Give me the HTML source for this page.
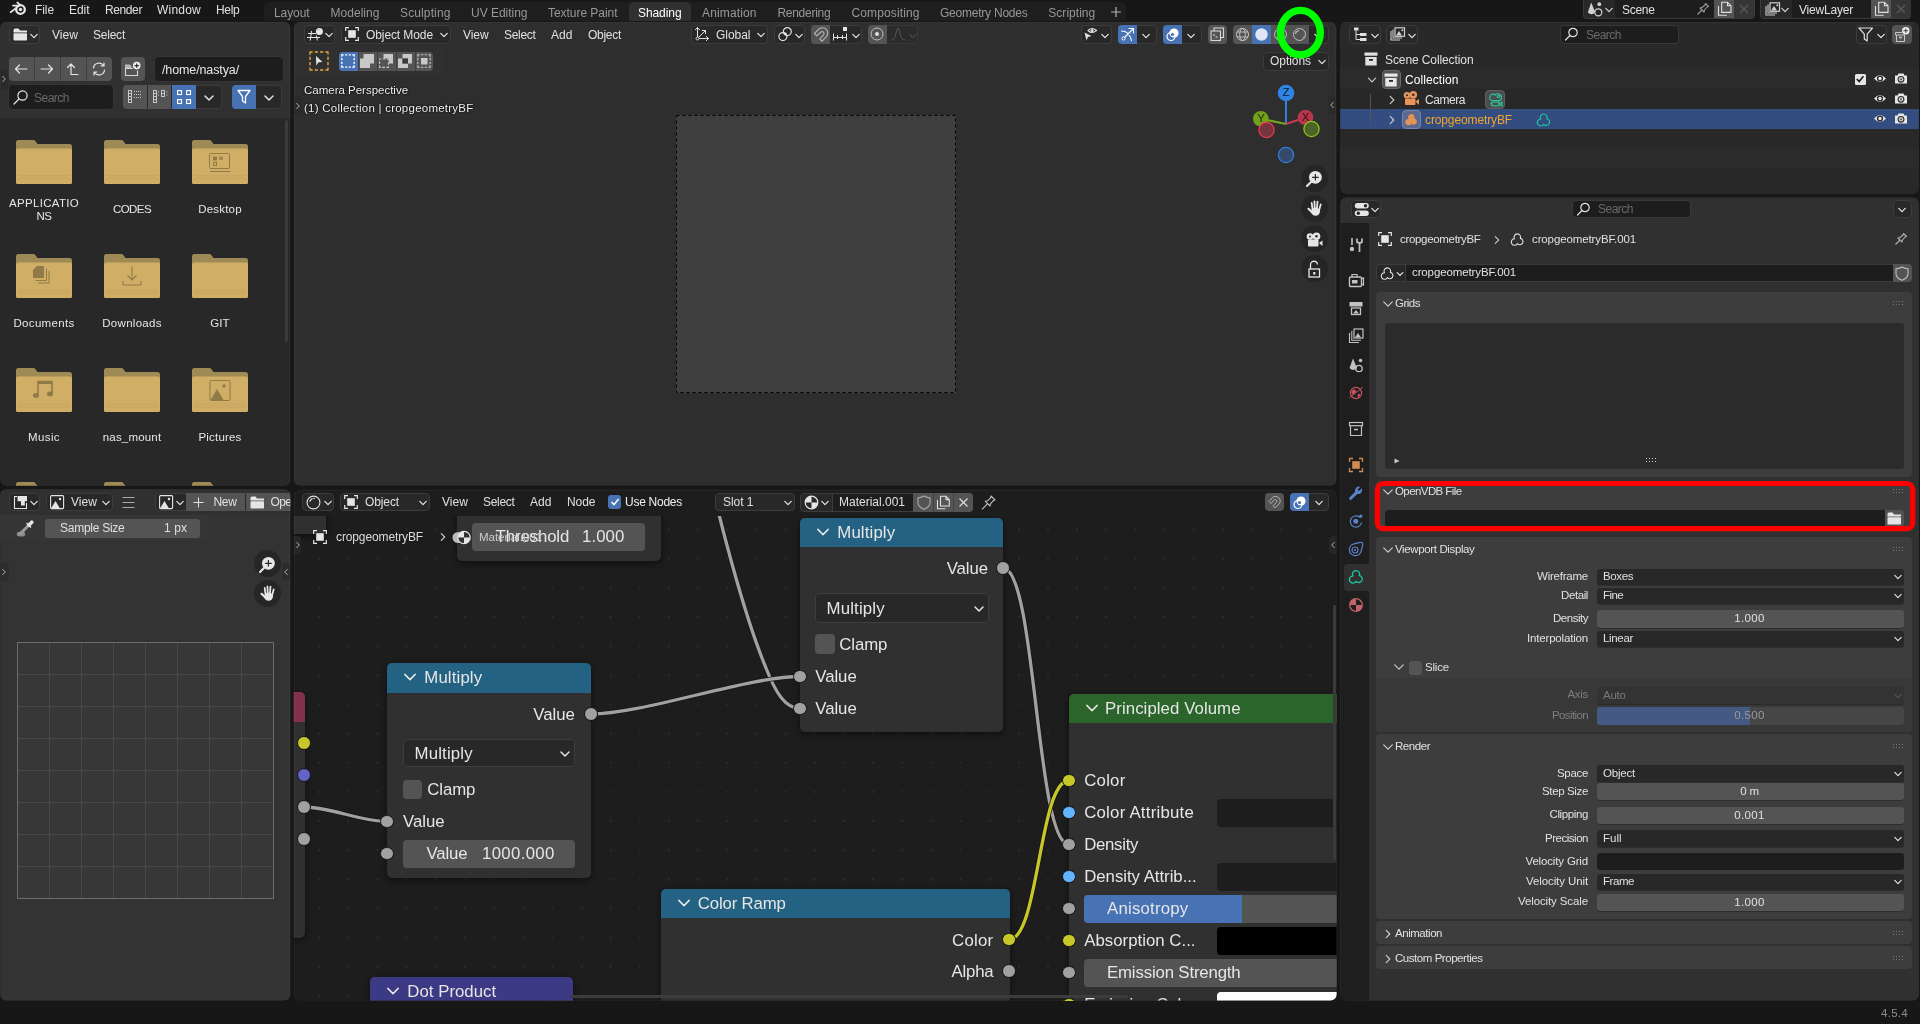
<!DOCTYPE html>
<html><head><meta charset="utf-8">
<style>
*{box-sizing:border-box;margin:0;padding:0}
html,body{width:1920px;height:1024px;overflow:hidden;background:#171717;font-family:"Liberation Sans",sans-serif;font-size:12px;color:#e6e6e6}
.abs{position:absolute}
.area{position:absolute;overflow:hidden;clip-path:inset(var(--t) var(--r) var(--b) var(--l) round var(--rad))}
.area:after{content:'';position:absolute;left:var(--l);top:var(--t);right:var(--r);bottom:var(--b);border-radius:var(--rad);box-shadow:inset 0 0 0 1px rgba(255,255,255,.035);pointer-events:none}
.t{position:absolute;white-space:nowrap}
svg{position:absolute;overflow:visible}
</style></head><body>
<div id="root" style="position:absolute;left:0;top:0;width:1920px;height:1024px;will-change:transform">
<svg style="left:9px;top:0px;" width="20" height="17" viewBox="0 0 20 17"><g fill="none" stroke="#e6e6e6" stroke-linecap="round"><path d="M1.6,12.2 L9.2,6.4 M4,5.6 H10.5 M8.3,2.5 L11.6,5.2" stroke-width="1.7"/><circle cx="11.5" cy="9.5" r="4.3" stroke-width="2.3"/></g><circle cx="11.5" cy="9.5" r="1.7" fill="#e6e6e6"/></svg>
<div class="t" style="left:35.00px;top:1.50px;font-size:12px;line-height:16px;color:#e0e0e0;letter-spacing:-0.086px;">File</div>
<div class="t" style="left:69.00px;top:1.50px;font-size:12px;line-height:16px;color:#e0e0e0;letter-spacing:-0.046px;">Edit</div>
<div class="t" style="left:105.00px;top:1.50px;font-size:12px;line-height:16px;color:#e0e0e0;letter-spacing:-0.395px;">Render</div>
<div class="t" style="left:157.00px;top:1.50px;font-size:12px;line-height:16px;color:#e0e0e0;letter-spacing:0.218px;">Window</div>
<div class="t" style="left:216.00px;top:1.50px;font-size:12px;line-height:16px;color:#e0e0e0;letter-spacing:-0.297px;">Help</div>
<div class="abs" style="left:264px;top:2.2px;width:862px;height:18.5px;background:#1e1e1e;border-radius:5px 5px 0 0;"></div>
<div class="abs" style="left:629px;top:2.2px;width:62px;height:18.5px;background:#303030;border-radius:5px 5px 0 0;"></div>
<div class="t" style="left:274.00px;top:4.70px;font-size:12px;line-height:16px;color:#989898;letter-spacing:-0.090px;">Layout</div>
<div class="t" style="left:330.50px;top:4.70px;font-size:12px;line-height:16px;color:#989898;letter-spacing:0.036px;">Modeling</div>
<div class="t" style="left:400.00px;top:4.70px;font-size:12px;line-height:16px;color:#989898;letter-spacing:0.125px;">Sculpting</div>
<div class="t" style="left:471.00px;top:4.70px;font-size:12px;line-height:16px;color:#989898;letter-spacing:-0.021px;">UV Editing</div>
<div class="t" style="left:548.00px;top:4.70px;font-size:12px;line-height:16px;color:#989898;letter-spacing:-0.043px;">Texture Paint</div>
<div class="t" style="left:638.00px;top:4.70px;font-size:12px;line-height:16px;color:#ffffff;letter-spacing:-0.079px;">Shading</div>
<div class="t" style="left:702.00px;top:4.70px;font-size:12px;line-height:16px;color:#989898;letter-spacing:0.147px;">Animation</div>
<div class="t" style="left:777.40px;top:4.70px;font-size:12px;line-height:16px;color:#989898;letter-spacing:-0.265px;">Rendering</div>
<div class="t" style="left:851.40px;top:4.70px;font-size:12px;line-height:16px;color:#989898;letter-spacing:0.135px;">Compositing</div>
<div class="t" style="left:940.00px;top:4.70px;font-size:12px;line-height:16px;color:#989898;letter-spacing:-0.230px;">Geometry Nodes</div>
<div class="t" style="left:1048.30px;top:4.70px;font-size:12px;line-height:16px;color:#989898;letter-spacing:0.033px;">Scripting</div>
<svg style="left:1110px;top:6px;" width="12" height="12" viewBox="0 0 12 12"><path d="M6,1 V11 M1,6 H11" stroke="#b0b0b0" stroke-width="1.2" fill="none"/></svg>
<div class="abs" style="left:1583px;top:0px;width:171.5px;height:18.5px;background:#282828;border-radius:0 0 4px 4px;border:1px solid #3a3a3a;border-top:none"></div>
<div class="abs" style="left:1615px;top:0px;width:99px;height:18px;background:#1d1d1d;border-radius:0px;"></div>
<div class="abs" style="left:1714px;top:0px;width:20px;height:18px;background:#545454;border-radius:0px;"></div>
<div class="abs" style="left:1734px;top:0px;width:20px;height:18px;background:#353535;border-radius:0 0 4px 0;"></div>
<svg style="left:1587px;top:1px;" width="18" height="16" viewBox="0 0 18 16"><path d="M4.2,1.5 L8.3,11.5 Q4.2,15 0.8,11.5 Z" fill="#d0d0d0"/><circle cx="12.3" cy="3.2" r="1.9" fill="#d0d0d0"/><circle cx="11.3" cy="11.3" r="3.5" fill="#222" stroke="#d0d0d0" stroke-width="1.3"/></svg>
<svg style="left:1601px;top:2px" width="16" height="16" viewBox="-8 -8 16 16"><path d="M-3.2,-1.6 L0,1.6 L3.2,-1.6" fill="none" stroke="#d0d0d0" stroke-width="1.3" stroke-linecap="round" stroke-linejoin="round"/></svg>
<div class="t" style="left:1622.00px;top:1.50px;font-size:12px;line-height:16px;color:#e0e0e0;letter-spacing:-0.306px;">Scene</div>
<svg style="left:1696px;top:2px;" width="14" height="14" viewBox="0 0 14 14"><path d="M9.5,1.5 L12.5,4.5 L11,5 L8.5,8 L8,10 L4,6 L6,5.5 L9,3 Z M6,8 L1.5,12.5" fill="none" stroke="#9a9a9a" stroke-width="1.1" stroke-linejoin="round"/></svg>
<svg style="left:1716.5px;top:1px;" width="15" height="16" viewBox="0 0 15 16"><path d="M1.5,5 V14.2 H9.8" fill="none" stroke="#e0e0e0" stroke-width="1.1"/><path d="M4.7,1.3 H10.5 L14,4.8 V11.4 H4.7 Z M10.5,1.3 V4.8 H14" fill="none" stroke="#e0e0e0" stroke-width="1.1" stroke-linejoin="round"/></svg>
<svg style="left:1739px;top:4px;" width="10" height="10" viewBox="0 0 10 10"><path d="M1,1 L9,9 M9,1 L1,9" stroke="#5a5a5a" stroke-width="1.2" fill="none"/></svg>
<div class="abs" style="left:1760px;top:0px;width:151px;height:18.5px;background:#282828;border-radius:0 0 4px 4px;border:1px solid #3a3a3a;border-top:none"></div>
<div class="abs" style="left:1792px;top:0px;width:79px;height:18px;background:#1d1d1d;border-radius:0px;"></div>
<div class="abs" style="left:1871px;top:0px;width:20px;height:18px;background:#545454;border-radius:0px;"></div>
<div class="abs" style="left:1891px;top:0px;width:20px;height:18px;background:#353535;border-radius:0 0 4px 0;"></div>
<svg style="left:1765px;top:2px;" width="16" height="14" viewBox="0 0 16 14"><path d="M1,4 V13 H10 M3,2.5 V11 H12" fill="none" stroke="#d0d0d0" stroke-width="1.1"/><rect x="5" y="0.8" width="9.5" height="8.5" fill="none" stroke="#d0d0d0" stroke-width="1.2"/><path d="M6,8.5 L9,4 L12,8.5 Z" fill="#d0d0d0"/><circle cx="12.3" cy="3.2" r="1" fill="#d0d0d0"/></svg>
<svg style="left:1777px;top:2px" width="16" height="16" viewBox="-8 -8 16 16"><path d="M-3.2,-1.6 L0,1.6 L3.2,-1.6" fill="none" stroke="#d0d0d0" stroke-width="1.3" stroke-linecap="round" stroke-linejoin="round"/></svg>
<div class="t" style="left:1799.00px;top:1.50px;font-size:12px;line-height:16px;color:#e0e0e0;letter-spacing:-0.203px;">ViewLayer</div>
<svg style="left:1873.5px;top:1px;" width="15" height="16" viewBox="0 0 15 16"><path d="M1.5,5 V14.2 H9.8" fill="none" stroke="#e0e0e0" stroke-width="1.1"/><path d="M4.7,1.3 H10.5 L14,4.8 V11.4 H4.7 Z M10.5,1.3 V4.8 H14" fill="none" stroke="#e0e0e0" stroke-width="1.1" stroke-linejoin="round"/></svg>
<svg style="left:1896px;top:4px;" width="10" height="10" viewBox="0 0 10 10"><path d="M1,1 L9,9 M9,1 L1,9" stroke="#5a5a5a" stroke-width="1.2" fill="none"/></svg>
<div class="t" style="left:1881.00px;top:1005.50px;font-size:11.5px;line-height:15px;color:#8c8c8c;letter-spacing:0.285px;">4.5.4</div>
<div class="area" style="left:0px;top:22px;width:291px;height:464px;background:#282828;--l:0.30px;--t:0.00px;--r:0.70px;--b:0.30px;--rad:6px;">
<div class="abs" style="left:0px;top:0px;width:291px;height:96px;background:#303030;border-radius:0px;"></div>
<div class="abs" style="left:8.5px;top:3px;width:31px;height:18.5px;background:#2b2b2b;border-radius:4px;border:1px solid #3e3e3e"></div>
<svg style="left:12.5px;top:5.5px;" width="15" height="13" viewBox="0 0 15 13"><path d="M0.5,2 Q0.5,0.5 2,0.5 H5.5 L7,2.5 H14 V4.5 H0.5 Z" fill="#e6e6e6"/><rect x="0.5" y="5.3" width="13.5" height="7.2" rx="0.8" fill="#e6e6e6"/></svg>
<svg style="left:25.5px;top:5.5px" width="16" height="16" viewBox="-8 -8 16 16"><path d="M-3.2,-1.6 L0,1.6 L3.2,-1.6" fill="none" stroke="#e0e0e0" stroke-width="1.3" stroke-linecap="round" stroke-linejoin="round"/></svg>
<div class="t" style="left:52.00px;top:5.00px;font-size:12px;line-height:16px;color:#e0e0e0;letter-spacing:0.050px;">View</div>
<div class="t" style="left:93.00px;top:5.00px;font-size:12px;line-height:16px;color:#e0e0e0;letter-spacing:-0.227px;">Select</div>
<div class="abs" style="left:9px;top:35px;width:102.5px;height:24px;background:#545454;border-radius:4px;"></div>
<div class="abs" style="left:34.2px;top:35px;width:1px;height:24px;background:#3f3f3f;border-radius:0px;"></div>
<div class="abs" style="left:60px;top:35px;width:1px;height:24px;background:#3f3f3f;border-radius:0px;"></div>
<div class="abs" style="left:85.8px;top:35px;width:1px;height:24px;background:#3f3f3f;border-radius:0px;"></div>
<svg style="left:14px;top:41px;" width="14" height="12" viewBox="0 0 14 12"><path d="M13,6 H1.5 M5.5,2 L1.5,6 L5.5,10" fill="none" stroke="#e6e6e6" stroke-width="1.2" stroke-linecap="round" stroke-linejoin="round"/></svg>
<svg style="left:40px;top:41px;" width="14" height="12" viewBox="0 0 14 12"><path d="M1,6 H12.5 M8.5,2 L12.5,6 L8.5,10" fill="none" stroke="#e6e6e6" stroke-width="1.2" stroke-linecap="round" stroke-linejoin="round"/></svg>
<svg style="left:66px;top:40px;" width="14" height="14" viewBox="0 0 14 14"><path d="M5,12.5 V2 M1.5,5.5 L5,2 L8.5,5.5 M5,12.5 H12" fill="none" stroke="#e6e6e6" stroke-width="1.2" stroke-linecap="round" stroke-linejoin="round"/></svg>
<svg style="left:92px;top:40px;" width="14" height="14" viewBox="0 0 14 14"><path d="M1.5,6 A5.5,5.5 0 0 1 11.5,3.5 M12,1 V4 H9 M12.5,8 A5.5,5.5 0 0 1 2.5,10.5 M2,13 V10 H5" fill="none" stroke="#e6e6e6" stroke-width="1.2" stroke-linecap="round" stroke-linejoin="round"/></svg>
<div class="abs" style="left:121px;top:35px;width:24px;height:24px;background:#545454;border-radius:4px;"></div>
<svg style="left:125px;top:39px;" width="16" height="15" viewBox="0 0 16 15"><path d="M0.5,7.5 V14.5 H12.5 V9.5" fill="none" stroke="#d8d8d8" stroke-width="1.1"/><path d="M0,3.5 H5 L6.5,5.5 V7.5 H0 Z" fill="#b8b8b8"/><path d="M0,7.5 H8" stroke="#d8d8d8" stroke-width="1.1"/><circle cx="11.7" cy="4.6" r="3.8" fill="#f0f0f0"/><path d="M11.7,2.4 V6.8 M9.5,4.6 H13.9" stroke="#2a2a2a" stroke-width="1.2"/></svg>
<div class="abs" style="left:155px;top:35px;width:127.5px;height:24px;background:#1d1d1d;border-radius:4px;box-shadow:0 0 0 0.6px #3a3a3a"></div>
<div class="t" style="left:162.00px;top:39.50px;font-size:12.5px;line-height:16px;color:#e6e6e6;letter-spacing:-0.117px;">/home/nastya/</div>
<div class="abs" style="left:9px;top:63px;width:104px;height:24px;background:#1d1d1d;border-radius:4px;box-shadow:0 0 0 0.6px #3a3a3a"></div>
<svg style="left:13px;top:67px;" width="16" height="16" viewBox="0 0 16 16"><circle cx="9.5" cy="6.5" r="4.6" fill="none" stroke="#e6e6e6" stroke-width="1.2" stroke-linecap="round" stroke-linejoin="round"/><path d="M6,10 L1,15" fill="none" stroke="#e6e6e6" stroke-width="1.2" stroke-linecap="round" stroke-linejoin="round"/></svg>
<div class="t" style="left:34.00px;top:67.50px;font-size:12px;line-height:16px;color:#6a6a6a;letter-spacing:-0.505px;">Search</div>
<div class="abs" style="left:123px;top:63px;width:99px;height:24px;background:#282828;border-radius:4px;border:1px solid #3a3a3a"></div>
<div class="abs" style="left:123px;top:63px;width:24px;height:24px;background:#545454;border-radius:4px 0 0 4px;"></div>
<div class="abs" style="left:148px;top:63px;width:23px;height:24px;background:#545454;border-radius:0px;"></div>
<div class="abs" style="left:172px;top:63px;width:24px;height:24px;background:#4772b3;border-radius:0px;"></div>
<svg style="left:127px;top:68px;" width="16" height="14" viewBox="0 0 16 14"><path d="M1.5,0.5 V12.5 M4.5,0.5 V12.5 M1,0.5 H5 M1,3.5 H5 M1,6.5 H5 M1,9.5 H5 M1,12.5 H5" stroke="#c8c8c8" stroke-width="1" fill="none"/><path d="M7,1.5 H15 M7,4.5 H15 M7,7.5 H15" stroke="#c8c8c8" stroke-width="1" stroke-dasharray="1,1" fill="none"/></svg>
<svg style="left:152px;top:68px;" width="16" height="14" viewBox="0 0 16 14"><path d="M1.5,0.5 V12.5 M4.5,0.5 V12.5 M1,0.5 H5 M1,3.5 H5 M1,6.5 H5 M1,9.5 H5 M1,12.5 H5" stroke="#c8c8c8" stroke-width="1" fill="none"/><path d="M9.5,0.5 V6.5 M12.5,0.5 V6.5 M9,0.5 H13 M9,3.5 H13 M9,6.5 H13" stroke="#c8c8c8" stroke-width="1" fill="none"/><g fill="#c8c8c8"><rect x="6" y="1.5" width="1" height="1"/><rect x="6" y="4.5" width="1" height="1"/><rect x="14.5" y="1.5" width="1" height="1"/><rect x="14.5" y="4.5" width="1" height="1"/></g></svg>
<svg style="left:177px;top:68px;" width="14" height="14" viewBox="0 0 14 14"><g fill="none" stroke="#ffffff" stroke-width="1.15"><rect x="0.6" y="0.6" width="3.9" height="3.9"/><rect x="9.6" y="0.6" width="3.9" height="3.9"/><rect x="0.6" y="9.6" width="3.9" height="3.9"/><rect x="9.6" y="9.6" width="3.9" height="3.9"/></g></svg>
<svg style="left:201px;top:67.5px" width="16" height="16" viewBox="-8 -8 16 16"><path d="M-4,-2.0 L0,2.0 L4,-2.0" fill="none" stroke="#e6e6e6" stroke-width="1.5" stroke-linecap="round" stroke-linejoin="round"/></svg>
<div class="abs" style="left:232px;top:63px;width:50px;height:24px;background:#282828;border-radius:4px;border:1px solid #3a3a3a"></div>
<div class="abs" style="left:232px;top:63px;width:24px;height:24px;background:#4772b3;border-radius:4px 0 0 4px;"></div>
<svg style="left:237px;top:67px;" width="14" height="16" viewBox="0 0 14 16"><path d="M1,1.5 H13 L8.5,7.5 V14 L5.5,12 V7.5 Z" fill="none" stroke="#ffffff" stroke-width="1.3" stroke-linejoin="round"/></svg>
<svg style="left:261px;top:67.5px" width="16" height="16" viewBox="-8 -8 16 16"><path d="M-4,-2.0 L0,2.0 L4,-2.0" fill="none" stroke="#e6e6e6" stroke-width="1.5" stroke-linecap="round" stroke-linejoin="round"/></svg>
<div class="abs" style="left:0px;top:47px;width:8px;height:20px;background:#2a2a2a;border-radius:0 4px 4px 0;"></div>
<svg style="left:-4.5px;top:49px" width="16" height="16" viewBox="-8 -8 16 16"><path d="M-1.3,-2.6 L1.3,0 L-1.3,2.6" fill="none" stroke="#b0b0b0" stroke-width="1" stroke-linecap="round" stroke-linejoin="round"/></svg>
<div class="abs" style="left:285px;top:98px;width:3.2px;height:222px;background:#3c3c3c;border-radius:2px;"></div>
<svg style="left:16px;top:118px;" width="56" height="44" viewBox="0 0 56 44"><path d="M0,2.5 Q0,0 2.5,0 H17 Q18.5,0 19.5,1.2 L21.5,4 H53.5 Q56,4 56,6.5 V12 H0 Z" fill="#9e8a55"/><path d="M0,10.5 Q0,8.5 2,8.5 H54 Q56,8.5 56,10.5 V42.5 Q56,44 54.5,44 H1.5 Q0,44 0,42.5 Z" fill="#d0ae66"/><path d="M2,35.5 H54 M2,37.5 H54 M2,39.5 H54" stroke="#c4a35e" stroke-width="0.6" fill="none"/></svg>
<div class="t" style="left:9.00px;top:173.50px;font-size:11.5px;line-height:15px;color:#e6e6e6;letter-spacing:0.311px;">APPLICATIO</div>
<div class="t" style="left:36.50px;top:186.50px;font-size:11.5px;line-height:15px;color:#e6e6e6;letter-spacing:-0.488px;">NS</div>
<svg style="left:104px;top:118px;" width="56" height="44" viewBox="0 0 56 44"><path d="M0,2.5 Q0,0 2.5,0 H17 Q18.5,0 19.5,1.2 L21.5,4 H53.5 Q56,4 56,6.5 V12 H0 Z" fill="#9e8a55"/><path d="M0,10.5 Q0,8.5 2,8.5 H54 Q56,8.5 56,10.5 V42.5 Q56,44 54.5,44 H1.5 Q0,44 0,42.5 Z" fill="#d0ae66"/><path d="M2,35.5 H54 M2,37.5 H54 M2,39.5 H54" stroke="#c4a35e" stroke-width="0.6" fill="none"/></svg>
<div class="t" style="left:113.00px;top:179.50px;font-size:11.5px;line-height:15px;color:#e6e6e6;letter-spacing:-0.580px;">CODES</div>
<svg style="left:192px;top:118px;" width="56" height="44" viewBox="0 0 56 44"><path d="M0,2.5 Q0,0 2.5,0 H17 Q18.5,0 19.5,1.2 L21.5,4 H53.5 Q56,4 56,6.5 V12 H0 Z" fill="#9e8a55"/><path d="M0,10.5 Q0,8.5 2,8.5 H54 Q56,8.5 56,10.5 V42.5 Q56,44 54.5,44 H1.5 Q0,44 0,42.5 Z" fill="#d0ae66"/><path d="M2,35.5 H54 M2,37.5 H54 M2,39.5 H54" stroke="#c4a35e" stroke-width="0.6" fill="none"/><rect x="17.5" y="13.5" width="20" height="15" rx="1" fill="none" stroke="#8f7a48" stroke-width="1"/><rect x="21" y="16.5" width="4" height="4" fill="#8f7a48"/><rect x="27" y="16.5" width="4" height="3.5" fill="#8f7a48" opacity=".7"/><rect x="21.5" y="22.5" width="3" height="3" fill="none" stroke="#8f7a48" stroke-width="1"/><path d="M18,31.5 H38" stroke="#8f7a48" stroke-width="1"/></svg>
<div class="t" style="left:198.25px;top:179.50px;font-size:11.5px;line-height:15px;color:#e6e6e6;letter-spacing:0.188px;">Desktop</div>
<svg style="left:16px;top:232px;" width="56" height="44" viewBox="0 0 56 44"><path d="M0,2.5 Q0,0 2.5,0 H17 Q18.5,0 19.5,1.2 L21.5,4 H53.5 Q56,4 56,6.5 V12 H0 Z" fill="#9e8a55"/><path d="M0,10.5 Q0,8.5 2,8.5 H54 Q56,8.5 56,10.5 V42.5 Q56,44 54.5,44 H1.5 Q0,44 0,42.5 Z" fill="#d0ae66"/><path d="M2,35.5 H54 M2,37.5 H54 M2,39.5 H54" stroke="#c4a35e" stroke-width="0.6" fill="none"/><path d="M21,12 H28 V24 H17 V16 Z" fill="#8f7a48"/><path d="M30.5,14.5 V26.5 H19.5 M33,17 V29 H22" fill="none" stroke="#8f7a48" stroke-width="1"/></svg>
<div class="t" style="left:13.50px;top:293.50px;font-size:11.5px;line-height:15px;color:#e6e6e6;letter-spacing:0.316px;">Documents</div>
<svg style="left:104px;top:232px;" width="56" height="44" viewBox="0 0 56 44"><path d="M0,2.5 Q0,0 2.5,0 H17 Q18.5,0 19.5,1.2 L21.5,4 H53.5 Q56,4 56,6.5 V12 H0 Z" fill="#9e8a55"/><path d="M0,10.5 Q0,8.5 2,8.5 H54 Q56,8.5 56,10.5 V42.5 Q56,44 54.5,44 H1.5 Q0,44 0,42.5 Z" fill="#d0ae66"/><path d="M2,35.5 H54 M2,37.5 H54 M2,39.5 H54" stroke="#c4a35e" stroke-width="0.6" fill="none"/><path d="M28,12.5 V26 M23.5,21.5 L28,26 L32.5,21.5 M19,27 V31 H37 V27" fill="none" stroke="#8f7a48" stroke-width="1.1"/></svg>
<div class="t" style="left:102.25px;top:293.50px;font-size:11.5px;line-height:15px;color:#e6e6e6;letter-spacing:0.290px;">Downloads</div>
<svg style="left:192px;top:232px;" width="56" height="44" viewBox="0 0 56 44"><path d="M0,2.5 Q0,0 2.5,0 H17 Q18.5,0 19.5,1.2 L21.5,4 H53.5 Q56,4 56,6.5 V12 H0 Z" fill="#9e8a55"/><path d="M0,10.5 Q0,8.5 2,8.5 H54 Q56,8.5 56,10.5 V42.5 Q56,44 54.5,44 H1.5 Q0,44 0,42.5 Z" fill="#d0ae66"/><path d="M2,35.5 H54 M2,37.5 H54 M2,39.5 H54" stroke="#c4a35e" stroke-width="0.6" fill="none"/></svg>
<div class="t" style="left:210.25px;top:293.50px;font-size:11.5px;line-height:15px;color:#e6e6e6;letter-spacing:0.112px;">GIT</div>
<svg style="left:16px;top:346px;" width="56" height="44" viewBox="0 0 56 44"><path d="M0,2.5 Q0,0 2.5,0 H17 Q18.5,0 19.5,1.2 L21.5,4 H53.5 Q56,4 56,6.5 V12 H0 Z" fill="#9e8a55"/><path d="M0,10.5 Q0,8.5 2,8.5 H54 Q56,8.5 56,10.5 V42.5 Q56,44 54.5,44 H1.5 Q0,44 0,42.5 Z" fill="#d0ae66"/><path d="M2,35.5 H54 M2,37.5 H54 M2,39.5 H54" stroke="#c4a35e" stroke-width="0.6" fill="none"/><path d="M22,27 V13.5 H36 V25.5" fill="none" stroke="#8f7a48" stroke-width="1.6"/><rect x="22" y="13" width="14" height="3" fill="#8f7a48"/><ellipse cx="20" cy="27.5" rx="3" ry="2.4" fill="#8f7a48"/><ellipse cx="34" cy="26" rx="3" ry="2.4" fill="#8f7a48"/></svg>
<div class="t" style="left:28.00px;top:407.50px;font-size:11.5px;line-height:15px;color:#e6e6e6;letter-spacing:0.395px;">Music</div>
<svg style="left:104px;top:346px;" width="56" height="44" viewBox="0 0 56 44"><path d="M0,2.5 Q0,0 2.5,0 H17 Q18.5,0 19.5,1.2 L21.5,4 H53.5 Q56,4 56,6.5 V12 H0 Z" fill="#9e8a55"/><path d="M0,10.5 Q0,8.5 2,8.5 H54 Q56,8.5 56,10.5 V42.5 Q56,44 54.5,44 H1.5 Q0,44 0,42.5 Z" fill="#d0ae66"/><path d="M2,35.5 H54 M2,37.5 H54 M2,39.5 H54" stroke="#c4a35e" stroke-width="0.6" fill="none"/></svg>
<div class="t" style="left:102.75px;top:407.50px;font-size:11.5px;line-height:15px;color:#e6e6e6;letter-spacing:0.179px;">nas_mount</div>
<svg style="left:192px;top:346px;" width="56" height="44" viewBox="0 0 56 44"><path d="M0,2.5 Q0,0 2.5,0 H17 Q18.5,0 19.5,1.2 L21.5,4 H53.5 Q56,4 56,6.5 V12 H0 Z" fill="#9e8a55"/><path d="M0,10.5 Q0,8.5 2,8.5 H54 Q56,8.5 56,10.5 V42.5 Q56,44 54.5,44 H1.5 Q0,44 0,42.5 Z" fill="#d0ae66"/><path d="M2,35.5 H54 M2,37.5 H54 M2,39.5 H54" stroke="#c4a35e" stroke-width="0.6" fill="none"/><rect x="18" y="12.5" width="20" height="20" rx="1" fill="none" stroke="#8f7a48" stroke-width="1"/><path d="M18.5,32 L25,21 L31.5,32 Z" fill="#8f7a48"/><circle cx="32" cy="18" r="1.7" fill="#8f7a48"/></svg>
<div class="t" style="left:198.50px;top:407.50px;font-size:11.5px;line-height:15px;color:#e6e6e6;letter-spacing:0.183px;">Pictures</div>
<svg style="left:16px;top:460px;" width="56" height="44" viewBox="0 0 56 44"><path d="M0,2.5 Q0,0 2.5,0 H17 Q18.5,0 19.5,1.2 L21.5,4 H53.5 Q56,4 56,6.5 V12 H0 Z" fill="#9e8a55"/><path d="M0,10.5 Q0,8.5 2,8.5 H54 Q56,8.5 56,10.5 V42.5 Q56,44 54.5,44 H1.5 Q0,44 0,42.5 Z" fill="#d0ae66"/><path d="M2,35.5 H54 M2,37.5 H54 M2,39.5 H54" stroke="#c4a35e" stroke-width="0.6" fill="none"/></svg>
<svg style="left:104px;top:460px;" width="56" height="44" viewBox="0 0 56 44"><path d="M0,2.5 Q0,0 2.5,0 H17 Q18.5,0 19.5,1.2 L21.5,4 H53.5 Q56,4 56,6.5 V12 H0 Z" fill="#9e8a55"/><path d="M0,10.5 Q0,8.5 2,8.5 H54 Q56,8.5 56,10.5 V42.5 Q56,44 54.5,44 H1.5 Q0,44 0,42.5 Z" fill="#d0ae66"/><path d="M2,35.5 H54 M2,37.5 H54 M2,39.5 H54" stroke="#c4a35e" stroke-width="0.6" fill="none"/></svg>
<svg style="left:192px;top:460px;" width="56" height="44" viewBox="0 0 56 44"><path d="M0,2.5 Q0,0 2.5,0 H17 Q18.5,0 19.5,1.2 L21.5,4 H53.5 Q56,4 56,6.5 V12 H0 Z" fill="#9e8a55"/><path d="M0,10.5 Q0,8.5 2,8.5 H54 Q56,8.5 56,10.5 V42.5 Q56,44 54.5,44 H1.5 Q0,44 0,42.5 Z" fill="#d0ae66"/><path d="M2,35.5 H54 M2,37.5 H54 M2,39.5 H54" stroke="#c4a35e" stroke-width="0.6" fill="none"/></svg>
</div>
<div class="area" style="left:293px;top:22px;width:1044px;height:464px;background:#2e2e2e;--l:0.80px;--t:0.00px;--r:0.60px;--b:0.40px;--rad:6px;">
<div class="abs" style="left:1px;top:27px;width:150px;height:25px;background:#303030;border-radius:0px;"></div>
<div class="abs" style="left:10.5px;top:3px;width:31px;height:18.5px;background:#282828;border-radius:4px;border:1px solid #3c3c3c"></div>
<svg style="left:14px;top:5px;" width="18" height="15" viewBox="0 0 18 15"><path d="M1,6.5 H9 M0,10.5 H13 M4.6,4 L3.2,13.5 M9.4,8.5 L10.4,13.5" stroke="#e6e6e6" stroke-width="1" fill="none"/><circle cx="12.4" cy="4.4" r="3.5" fill="#e6e6e6"/><path d="M10.6,3.6 A2.2,2.2 0 0 1 12.4,2.3" stroke="#9a9a9a" stroke-width="0.8" fill="none"/></svg>
<svg style="left:27.5px;top:5px" width="16" height="16" viewBox="-8 -8 16 16"><path d="M-3.2,-1.6 L0,1.6 L3.2,-1.6" fill="none" stroke="#e0e0e0" stroke-width="1.3" stroke-linecap="round" stroke-linejoin="round"/></svg>
<div class="abs" style="left:47.5px;top:3px;width:110px;height:18.5px;background:#282828;border-radius:4px;border:1px solid #3c3c3c"></div>
<svg style="left:52px;top:5px;" width="14" height="14" viewBox="0 0 14 14"><rect x="3.2" y="3.2" width="7.6" height="7.6" fill="#e6e6e6"/><path d="M0.7,4 V0.7 H4 M10,0.7 H13.3 V4 M13.3,10 V13.3 H10 M4,13.3 H0.7 V10" fill="none" stroke="#e6e6e6" stroke-width="1.2"/></svg>
<div class="t" style="left:73.00px;top:4.50px;font-size:12px;line-height:16px;color:#e0e0e0;letter-spacing:-0.096px;">Object Mode</div>
<svg style="left:143px;top:5px" width="16" height="16" viewBox="-8 -8 16 16"><path d="M-3.2,-1.6 L0,1.6 L3.2,-1.6" fill="none" stroke="#e0e0e0" stroke-width="1.3" stroke-linecap="round" stroke-linejoin="round"/></svg>
<div class="t" style="left:170.00px;top:4.50px;font-size:12px;line-height:16px;color:#e0e0e0;letter-spacing:-0.075px;">View</div>
<div class="t" style="left:211.00px;top:4.50px;font-size:12px;line-height:16px;color:#e0e0e0;letter-spacing:-0.310px;">Select</div>
<div class="t" style="left:258.00px;top:4.50px;font-size:12px;line-height:16px;color:#e0e0e0;letter-spacing:0.048px;">Add</div>
<div class="t" style="left:295.00px;top:4.50px;font-size:12px;line-height:16px;color:#e0e0e0;letter-spacing:-0.282px;">Object</div>
<div class="abs" style="left:398px;top:3px;width:76.5px;height:18.5px;background:#282828;border-radius:4px;border:1px solid #3c3c3c"></div>
<svg style="left:402px;top:5px;" width="15" height="15" viewBox="0 0 15 15"><g fill="none" stroke="#e0e0e0" stroke-width="1" stroke-linecap="round" stroke-linejoin="round"><path d="M2.5,11.5 V0.6 M0.3,2.8 L2.5,0.6 L4.7,2.8 M2.5,11.5 H13.5 M11.3,9.3 L13.5,11.5 L11.3,13.7 M2.5,11.5 L10.5,3.5 M7.3,3.5 H10.5 V6.7"/></g><circle cx="2.5" cy="11.5" r="1.5" fill="#282828" stroke="#e0e0e0" stroke-width="0.9"/></svg>
<div class="t" style="left:423.00px;top:4.50px;font-size:12px;line-height:16px;color:#e0e0e0;letter-spacing:-0.033px;">Global</div>
<svg style="left:460px;top:5px" width="16" height="16" viewBox="-8 -8 16 16"><path d="M-3.2,-1.6 L0,1.6 L3.2,-1.6" fill="none" stroke="#e0e0e0" stroke-width="1.3" stroke-linecap="round" stroke-linejoin="round"/></svg>
<div class="abs" style="left:480.5px;top:3px;width:31px;height:18.5px;background:#282828;border-radius:4px;border:1px solid #3c3c3c"></div>
<svg style="left:484px;top:5px;" width="14" height="15" viewBox="0 0 14 15"><circle cx="10.3" cy="4.6" r="4" fill="none" stroke="#e0e0e0" stroke-width="1.2" stroke-linecap="round" stroke-linejoin="round"/><circle cx="5.9" cy="9.6" r="4" fill="none" stroke="#e0e0e0" stroke-width="1.2" stroke-linecap="round" stroke-linejoin="round"/><circle cx="8.3" cy="6.8" r="1.25" fill="#e6e6e6"/></svg>
<svg style="left:497.5px;top:5.5px" width="16" height="16" viewBox="-8 -8 16 16"><path d="M-3.2,-1.6 L0,1.6 L3.2,-1.6" fill="none" stroke="#e0e0e0" stroke-width="1.3" stroke-linecap="round" stroke-linejoin="round"/></svg>
<div class="abs" style="left:518px;top:3px;width:50.5px;height:18.5px;background:#282828;border-radius:4px;border:1px solid #3c3c3c"></div>
<div class="abs" style="left:518px;top:3px;width:19px;height:18.5px;background:#545454;border-radius:4px 0 0 4px;"></div>
<svg style="left:519.5px;top:4.5px;" width="16" height="16" viewBox="0 0 16 16"><path d="M1.5,6.5 L5.5,2.3 A5.2,5.2 0 0 1 13.2,9.8 L9,14.2 L6.8,12 L10.6,7.8 A2,2 0 0 0 7.8,5 L3.8,8.8 Z" fill="none" stroke="#b8b8b8" stroke-width="1.1" stroke-linejoin="round"/></svg>
<svg style="left:539px;top:4px;" width="16" height="15" viewBox="0 0 16 15"><path d="M1.5,7.5 V14.5 M14.5,7.5 V14.5 M5.5,9 V13 M10.5,9 V13 M1.5,11.5 H14.5" stroke="#e0e0e0" stroke-width="1" fill="none"/><rect x="11" y="1" width="4" height="4" fill="#e6e6e6"/></svg>
<svg style="left:554.5px;top:5.5px" width="16" height="16" viewBox="-8 -8 16 16"><path d="M-3.2,-1.6 L0,1.6 L3.2,-1.6" fill="none" stroke="#e0e0e0" stroke-width="1.3" stroke-linecap="round" stroke-linejoin="round"/></svg>
<div class="abs" style="left:574.5px;top:3px;width:50.5px;height:18.5px;background:#2b2b2b;border-radius:4px;border:1px solid #383838"></div>
<div class="abs" style="left:574.5px;top:3px;width:19px;height:18.5px;background:#545454;border-radius:4px 0 0 4px;"></div>
<svg style="left:577px;top:5px;" width="14" height="14" viewBox="0 0 14 14"><circle cx="7" cy="7" r="6" fill="none" stroke="#c0c0c0" stroke-width="1"/><circle cx="7" cy="7" r="2" fill="#e0e0e0"/></svg>
<svg style="left:597px;top:5px;" width="16" height="14" viewBox="0 0 16 14"><path d="M1,13 Q5,13 6,6 Q7,1 8,1 Q9,1 10,6 Q11,13 15,13" fill="none" stroke="#555" stroke-width="1"/></svg>
<svg style="left:611.5px;top:5.5px" width="16" height="16" viewBox="-8 -8 16 16"><path d="M-3.2,-1.6 L0,1.6 L3.2,-1.6" fill="none" stroke="#4a4a4a" stroke-width="1.3" stroke-linecap="round" stroke-linejoin="round"/></svg>
<div class="abs" style="left:788px;top:3px;width:30.5px;height:18.5px;background:#282828;border-radius:4px;border:1px solid #3c3c3c"></div>
<svg style="left:790px;top:4px;" width="18" height="16" viewBox="0 0 18 16"><path d="M5,4.5 Q9,0.5 13.5,4.5 Q9,8.5 5,4.5 Z" fill="none" stroke="#e0e0e0" stroke-width="1.1"/><circle cx="9.2" cy="4.5" r="1.5" fill="#e0e0e0"/><path d="M1.5,6.5 L8.5,10 L5,11 L3.5,14.5 Z" fill="#e0e0e0"/></svg>
<svg style="left:804px;top:5.5px" width="16" height="16" viewBox="-8 -8 16 16"><path d="M-3.2,-1.6 L0,1.6 L3.2,-1.6" fill="none" stroke="#e0e0e0" stroke-width="1.3" stroke-linecap="round" stroke-linejoin="round"/></svg>
<div class="abs" style="left:825px;top:3px;width:38.5px;height:18.5px;background:#282828;border-radius:4px;border:1px solid #3c3c3c"></div>
<div class="abs" style="left:825px;top:3px;width:18.5px;height:18.5px;background:#4772b3;border-radius:4px 0 0 4px;"></div>
<svg style="left:827px;top:5px;" width="15" height="15" viewBox="0 0 15 15"><path d="M1.5,4 Q9,4 11.5,13.5 M3.5,11.5 L13,2 M9,1.5 H13.5 V6" fill="none" stroke="#ffffff" stroke-width="1.1" stroke-linecap="round"/><circle cx="3.5" cy="11.5" r="1.6" fill="#4772b3" stroke="#fff" stroke-width="1"/></svg>
<svg style="left:845px;top:5.5px" width="16" height="16" viewBox="-8 -8 16 16"><path d="M-3.2,-1.6 L0,1.6 L3.2,-1.6" fill="none" stroke="#e0e0e0" stroke-width="1.3" stroke-linecap="round" stroke-linejoin="round"/></svg>
<div class="abs" style="left:870px;top:3px;width:38.5px;height:18.5px;background:#282828;border-radius:4px;border:1px solid #3c3c3c"></div>
<div class="abs" style="left:870px;top:3px;width:18.5px;height:18.5px;background:#4772b3;border-radius:4px 0 0 4px;"></div>
<svg style="left:872px;top:5px;" width="15" height="15" viewBox="0 0 15 15"><circle cx="9" cy="6" r="4.6" fill="#ffffff"/><circle cx="6" cy="9.5" r="4" fill="none" stroke="#ffffff" stroke-width="1.2"/><circle cx="7.5" cy="7.5" r="1.6" fill="#4772b3"/></svg>
<svg style="left:890px;top:5.5px" width="16" height="16" viewBox="-8 -8 16 16"><path d="M-3.2,-1.6 L0,1.6 L3.2,-1.6" fill="none" stroke="#e0e0e0" stroke-width="1.3" stroke-linecap="round" stroke-linejoin="round"/></svg>
<div class="abs" style="left:915px;top:3px;width:18.5px;height:18.5px;background:#545454;border-radius:4px;"></div>
<svg style="left:917px;top:5px;" width="15" height="15" viewBox="0 0 15 15"><rect x="1" y="4" width="9.5" height="9.5" fill="none" stroke="#d8d8d8" stroke-width="1.1"/><path d="M4,4 V1 H13.5 V10.5 H10.5" fill="none" stroke="#d8d8d8" stroke-width="1.1"/><path d="M4,7 V9 M5.5,10 H7.5" stroke="#d8d8d8" stroke-width="1.1"/></svg>
<div class="abs" style="left:940px;top:3px;width:95.5px;height:18.5px;background:#282828;border-radius:4px;border:1px solid #3c3c3c"></div>
<div class="abs" style="left:940px;top:3px;width:18.6px;height:18.5px;background:#545454;border-radius:4px 0 0 4px;"></div>
<div class="abs" style="left:959px;top:3px;width:18.5px;height:18.5px;background:#4772b3;border-radius:0px;"></div>
<div class="abs" style="left:978px;top:3px;width:18.5px;height:18.5px;background:#545454;border-radius:0px;"></div>
<div class="abs" style="left:997px;top:3px;width:18.5px;height:18.5px;background:#545454;border-radius:0px;"></div>
<svg style="left:942px;top:5px;" width="15" height="15" viewBox="0 0 15 15"><circle cx="7.5" cy="7.5" r="6" fill="none" stroke="#c8c8c8" stroke-width="1"/><ellipse cx="7.5" cy="7.5" rx="2.8" ry="6" fill="none" stroke="#c8c8c8" stroke-width="0.9"/><path d="M2,5 H13 M2,10 H13" stroke="#c8c8c8" stroke-width="0.9"/></svg>
<svg style="left:961px;top:5px;" width="15" height="15" viewBox="0 0 15 15"><circle cx="7.5" cy="7.5" r="6.2" fill="#dfe6f5"/></svg>
<svg style="left:980px;top:5px;" width="15" height="15" viewBox="0 0 15 15"><circle cx="7.5" cy="7.5" r="6" fill="none" stroke="#bdbdbd" stroke-width="1"/><path d="M2.5,10.5 A6,6 0 0 0 13,9 L7.5,7.5 Z" fill="#8a8a8a"/></svg>
<svg style="left:999px;top:5px;" width="15" height="15" viewBox="0 0 15 15"><circle cx="7.5" cy="7.5" r="6" fill="none" stroke="#bdbdbd" stroke-width="1"/><path d="M3.5,7 A4,4 0 0 1 7,3.5" fill="none" stroke="#bdbdbd" stroke-width="1.2"/><path d="M11,11.5 A6,6 0 0 0 13,9" stroke="#999" stroke-width="2" fill="none"/></svg>
<svg style="left:1017px;top:5.5px" width="16" height="16" viewBox="-8 -8 16 16"><path d="M-3.2,-1.6 L0,1.6 L3.2,-1.6" fill="none" stroke="#e0e0e0" stroke-width="1.3" stroke-linecap="round" stroke-linejoin="round"/></svg>
<div class="abs" style="left:969.5px;top:30px;width:66px;height:18.5px;background:#282828;border-radius:4px;border:1px solid #3c3c3c"></div>
<div class="t" style="left:977.00px;top:31.00px;font-size:12px;line-height:16px;color:#e0e0e0;letter-spacing:-0.052px;">Options</div>
<svg style="left:1021px;top:31.5px" width="16" height="16" viewBox="-8 -8 16 16"><path d="M-3.2,-1.6 L0,1.6 L3.2,-1.6" fill="none" stroke="#e0e0e0" stroke-width="1.3" stroke-linecap="round" stroke-linejoin="round"/></svg>
<svg style="left:16.2px;top:29px;" width="20" height="20" viewBox="0 0 20 20"><rect x="1" y="1" width="18" height="18" fill="none" stroke="#e8a33c" stroke-width="1.4" stroke-linejoin="round" stroke-dasharray="5.2,2.13,3.2,2.13,3.2,2.13" stroke-dashoffset="2.6"/><path d="M7,5 L13.5,11 L9.5,11.3 L7.3,14.5 Z" fill="#e6e6e6"/></svg>
<div class="abs" style="left:46px;top:30px;width:94px;height:19px;background:#545454;border-radius:4px;"></div>
<div class="abs" style="left:46px;top:30px;width:18.5px;height:19px;background:#4772b3;border-radius:4px 0 0 4px;"></div>
<div class="abs" style="left:64.5px;top:30px;width:1px;height:19px;background:#3f3f3f;border-radius:0px;"></div>
<div class="abs" style="left:83.5px;top:30px;width:1px;height:19px;background:#3f3f3f;border-radius:0px;"></div>
<div class="abs" style="left:102.5px;top:30px;width:1px;height:19px;background:#3f3f3f;border-radius:0px;"></div>
<div class="abs" style="left:121.5px;top:30px;width:1px;height:19px;background:#3f3f3f;border-radius:0px;"></div>
<svg style="left:48px;top:32px;" width="14" height="14" viewBox="0 0 14 14"><rect x="0.8" y="0.8" width="12.4" height="12.4" fill="none" stroke="#fff" stroke-width="1.3" stroke-dasharray="3.8,1.4,2.2,1.4,2.2,1.4" stroke-dashoffset="1.9"/></svg>
<svg style="left:67px;top:32px;" width="14" height="14" viewBox="0 0 14 14"><path d="M3.5,0 H14 V9.5 H10 V14 H0 V4.5 H3.5 Z" fill="#c8c8c8"/></svg>
<svg style="left:86px;top:32px;" width="14" height="14" viewBox="0 0 14 14"><path d="M4.5,0 H14 V9.5 H10 V4.5 H4.5 Z" fill="#c8c8c8"/><rect x="0.6" y="5" width="8.8" height="8.4" fill="none" stroke="#c8c8c8" stroke-width="1.1" stroke-dasharray="3,1.5,2.8,1.5" stroke-dashoffset="1.5"/></svg>
<svg style="left:105px;top:32px;" width="14" height="14" viewBox="0 0 14 14"><path d="M4.5,0 H14 V9.5 H10 V4.5 H4.5 Z M0,4.5 H4.5 V9.5 H10 V14 H0 Z" fill="#c8c8c8"/><rect x="4.5" y="4.5" width="5.5" height="5" fill="#3a3a3a"/></svg>
<svg style="left:124px;top:32px;" width="14" height="14" viewBox="0 0 14 14"><rect x="4" y="4" width="6.5" height="6.5" fill="#c8c8c8"/><rect x="0.8" y="0.8" width="12.4" height="12.4" fill="none" stroke="#c8c8c8" stroke-width="1.1" stroke-dasharray="3.8,1.4,2.2,1.4,2.2,1.4" stroke-dashoffset="1.9"/></svg>
<div class="t" style="left:11.00px;top:60.50px;font-size:11.5px;line-height:15px;color:#f2f2f2;letter-spacing:-0.009px;text-shadow:0 0 2px #000,0 0 1px #000">Camera Perspective</div>
<div class="t" style="left:11.00px;top:78.50px;font-size:11.5px;line-height:15px;color:#f2f2f2;letter-spacing:0.238px;text-shadow:0 0 2px #000,0 0 1px #000">(1) Collection | cropgeometryBF</div>
<div class="abs" style="left:1px;top:74px;width:8px;height:19px;background:#2a2a2a;border-radius:0 4px 4px 0;"></div>
<svg style="left:-3.5px;top:75.5px" width="16" height="16" viewBox="-8 -8 16 16"><path d="M-1.3,-2.6 L1.3,0 L-1.3,2.6" fill="none" stroke="#b0b0b0" stroke-width="1" stroke-linecap="round" stroke-linejoin="round"/></svg>
<div class="abs" style="left:1035px;top:73px;width:8px;height:20px;background:#2a2a2a;border-radius:4px 0 0 4px;"></div>
<svg style="left:1031px;top:75px" width="16" height="16" viewBox="-8 -8 16 16"><path d="M1.3,-2.6 L-1.3,0 L1.3,2.6" fill="none" stroke="#b0b0b0" stroke-width="1" stroke-linecap="round" stroke-linejoin="round"/></svg>
<div class="abs" style="left:383px;top:93px;width:280px;height:278px;background:#3f3f3f;border-radius:0px;"></div>
<svg style="left:383px;top:93px;" width="280" height="278" viewBox="0 0 280 278"><rect x="0.5" y="0.5" width="279" height="277" fill="none" stroke="#000" stroke-width="1" stroke-dasharray="3,3"/></svg>
<svg style="left:907px;top:38px;" width="140" height="120" viewBox="0 0 140 120"><path d="M86,64 L86,35" stroke="#2f83e3" stroke-width="2"/><path d="M86,64 L104,58" stroke="#c9384f" stroke-width="2.2"/><path d="M86,64 L62,59" stroke="#76a51c" stroke-width="2.2"/>
<circle cx="86" cy="33" r="8.3" fill="#2f83e3"/><circle cx="105.5" cy="57.5" r="7.8" fill="#b5374d"/><circle cx="60.8" cy="58.8" r="7.8" fill="#73a11e"/>
<circle cx="66.5" cy="70" r="7.6" fill="#753541" stroke="#f0354c" stroke-width="1.3"/><circle cx="111.5" cy="69" r="7.6" fill="#4d6329" stroke="#86c915" stroke-width="1.3"/><circle cx="86" cy="95" r="7.6" fill="#35496a" stroke="#2f7fd8" stroke-width="1.3"/></svg>
<div class="t" style="left:989.49px;top:63.20px;font-size:11.5px;line-height:15px;color:#0a1a30;">Z</div>
<div class="t" style="left:1008.66px;top:88.00px;font-size:11.5px;line-height:15px;color:#3a0a10;">X</div>
<div class="t" style="left:964.16px;top:89.00px;font-size:11.5px;line-height:15px;color:#1c2a05;">Y</div>
<div class="abs" style="left:1007.5px;top:142.5px;width:27px;height:27px;background:#252525;border-radius:14px;"></div>
<div class="abs" style="left:1007.5px;top:172.5px;width:27px;height:27px;background:#252525;border-radius:14px;"></div>
<div class="abs" style="left:1007.5px;top:202.5px;width:27px;height:27px;background:#252525;border-radius:14px;"></div>
<div class="abs" style="left:1007.5px;top:233px;width:27px;height:27px;background:#252525;border-radius:14px;"></div>
<svg style="left:1012px;top:147px;" width="18" height="18" viewBox="0 0 18 18"><circle cx="10.4" cy="8.3" r="6.4" fill="#e6e6e6"/><path d="M6,13 L2,17" stroke="#e6e6e6" stroke-width="2.2" stroke-linecap="round"/><path d="M10.4,5 V11.6 M7.1,8.3 H13.7" stroke="#252525" stroke-width="1.2"/></svg>
<svg style="left:1013.5px;top:177.5px;" width="16" height="17" viewBox="0 0 16 17"><ellipse cx="8.6" cy="11.6" rx="4.4" ry="4.2" fill="#e6e6e6"/><g stroke="#e6e6e6" stroke-linecap="round" fill="none"><path d="M5.6,10 L4.7,3" stroke-width="1.8"/><path d="M7.7,9 L7.5,1.3" stroke-width="1.8"/><path d="M9.9,9 L10.5,1.7" stroke-width="1.8"/><path d="M12,10.5 L13.7,4.4" stroke-width="1.8"/><path d="M5.6,12.8 L1.5,8.8" stroke-width="2.2"/></g></svg>
<svg style="left:1012px;top:209.5px;" width="18" height="16" viewBox="0 0 18 16"><circle cx="5" cy="4.5" r="3.3" fill="#e6e6e6"/><circle cx="11.5" cy="4.2" r="3.8" fill="#e6e6e6"/><rect x="3" y="7.5" width="10.5" height="7" rx="1" fill="#e6e6e6"/><path d="M14,11 L17.5,8.5 V14 Z" fill="#e6e6e6"/><circle cx="5" cy="4.5" r="1" fill="#252525"/><circle cx="11.5" cy="4.2" r="1.2" fill="#252525"/></svg>
<svg style="left:1014px;top:237.7px;" width="14" height="18" viewBox="0 0 14 18"><path d="M3.5,9 V5 A3.5,3.5 0 0 1 10.5,4.5" fill="none" stroke="#e6e6e6" stroke-width="1.3"/><rect x="2" y="9" width="10.5" height="8" fill="none" stroke="#e6e6e6" stroke-width="1.3"/><rect x="6.2" y="12" width="2.2" height="2.6" fill="#e6e6e6"/></svg>
</div>
<div class="area" style="left:1340px;top:22px;width:579px;height:172px;background:#282828;--l:0.30px;--t:0.00px;--r:0.20px;--b:0.30px;--rad:6px;">
<div class="abs" style="left:0px;top:0px;width:580px;height:26.5px;background:#292929;border-radius:0px;"></div>
<div class="abs" style="left:0px;top:47px;width:580px;height:20px;background:#2b2b2b;border-radius:0px;"></div>
<div class="abs" style="left:0px;top:87px;width:580px;height:20px;background:#334d80;border-radius:0px;"></div>
<div class="abs" style="left:0px;top:127px;width:580px;height:20px;background:#2b2b2b;border-radius:0px;"></div>
<div class="abs" style="left:9px;top:3px;width:32px;height:18.5px;background:#282828;border-radius:4px;border:1px solid #3c3c3c"></div>
<svg style="left:13px;top:5px;" width="14" height="14" viewBox="0 0 14 14"><rect x="1" y="0.5" width="4.5" height="3" fill="#e0e0e0"/><rect x="7" y="6" width="6.5" height="3" fill="#e0e0e0"/><rect x="7" y="11" width="6.5" height="3" fill="#e0e0e0"/><path d="M3,3.5 V12.5 H7 M3,7.5 H7" fill="none" stroke="#e0e0e0" stroke-width="1"/></svg>
<svg style="left:26.5px;top:5.5px" width="16" height="16" viewBox="-8 -8 16 16"><path d="M-3.2,-1.6 L0,1.6 L3.2,-1.6" fill="none" stroke="#e0e0e0" stroke-width="1.3" stroke-linecap="round" stroke-linejoin="round"/></svg>
<div class="abs" style="left:46px;top:3px;width:32px;height:18.5px;background:#282828;border-radius:4px;border:1px solid #3c3c3c"></div>
<svg style="left:50px;top:5px;" width="16" height="14" viewBox="0 0 16 14"><path d="M1,4 V13 H10 M3,2.5 V11 H12" fill="none" stroke="#d0d0d0" stroke-width="1.1"/><rect x="5" y="0.8" width="9.5" height="8.5" fill="none" stroke="#d0d0d0" stroke-width="1.2"/><path d="M6,8.5 L9,4 L12,8.5 Z" fill="#d0d0d0"/><circle cx="12.3" cy="3.2" r="1" fill="#d0d0d0"/></svg>
<svg style="left:63.5px;top:5.5px" width="16" height="16" viewBox="-8 -8 16 16"><path d="M-3.2,-1.6 L0,1.6 L3.2,-1.6" fill="none" stroke="#e0e0e0" stroke-width="1.3" stroke-linecap="round" stroke-linejoin="round"/></svg>
<div class="abs" style="left:220px;top:3px;width:119px;height:18.5px;background:#1d1d1d;border-radius:4px;border:1px solid #383838"></div>
<svg style="left:224px;top:5px;" width="15" height="15" viewBox="0 0 15 15"><circle cx="9" cy="5.5" r="4.2" fill="none" stroke="#e0e0e0" stroke-width="1.2" stroke-linecap="round"/><path d="M6,8.5 L1.5,13" fill="none" stroke="#e0e0e0" stroke-width="1.2" stroke-linecap="round"/></svg>
<div class="t" style="left:246.00px;top:4.50px;font-size:12px;line-height:16px;color:#6a6a6a;letter-spacing:-0.505px;">Search</div>
<div class="abs" style="left:515.5px;top:3px;width:31px;height:18.5px;background:#282828;border-radius:4px;border:1px solid #3c3c3c"></div>
<svg style="left:517.5px;top:5px;" width="16" height="15" viewBox="0 0 16 15"><path d="M1,1 H14.5 L9.2,7.2 V14 L6.3,12 V7.2 Z" fill="none" stroke="#e0e0e0" stroke-width="1.2" stroke-linejoin="round"/></svg>
<svg style="left:532.5px;top:5.5px" width="16" height="16" viewBox="-8 -8 16 16"><path d="M-3.2,-1.6 L0,1.6 L3.2,-1.6" fill="none" stroke="#e0e0e0" stroke-width="1.3" stroke-linecap="round" stroke-linejoin="round"/></svg>
<div class="abs" style="left:552px;top:3px;width:19.5px;height:18.5px;background:#545454;border-radius:4px;"></div>
<svg style="left:554px;top:4px;" width="16" height="16" viewBox="0 0 16 16"><path d="M8,6.5 H1.5 V9 H11" fill="none" stroke="#c8c8c8" stroke-width="1"/><path d="M2.5,9 V15.5 H10.5 V9" fill="none" stroke="#c8c8c8" stroke-width="1"/><path d="M5,11.5 H8" stroke="#c8c8c8" stroke-width="1.3"/><circle cx="11.8" cy="4.7" r="3.7" fill="#f0f0f0"/><path d="M11.8,2.4 V7 M9.5,4.7 H14.1" stroke="#303030" stroke-width="0.9"/></svg>
<svg style="left:24px;top:30px;" width="14" height="14" viewBox="0 0 14 14"><rect x="0.5" y="0.5" width="13" height="3.2" fill="#e0e0e0"/><path d="M1.3,5 H12.7 V13.5 H1.3 Z" fill="#e0e0e0"/><rect x="5" y="7" width="4" height="1.8" fill="#282828"/></svg>
<div class="t" style="left:45.00px;top:30.00px;font-size:12px;line-height:16px;color:#e0e0e0;letter-spacing:-0.099px;">Scene Collection</div>
<svg style="left:23.5px;top:49.5px" width="16" height="16" viewBox="-8 -8 16 16"><path d="M-3.6,-1.8 L0,1.8 L3.6,-1.8" fill="none" stroke="#c8c8c8" stroke-width="1.2" stroke-linecap="round" stroke-linejoin="round"/></svg>
<div class="abs" style="left:41.5px;top:48px;width:19px;height:18.5px;background:#505050;border-radius:4px;border:1px solid #6a6a6a"></div>
<svg style="left:44px;top:50.5px;" width="14" height="14" viewBox="0 0 14 14"><rect x="0.5" y="0.5" width="13" height="3.2" fill="#e8e8e8"/><path d="M1.3,5 H12.7 V13.5 H1.3 Z" fill="#e8e8e8"/><rect x="5" y="7" width="4" height="1.8" fill="#282828"/></svg>
<div class="t" style="left:65.00px;top:50.00px;font-size:12px;line-height:16px;color:#ffffff;letter-spacing:0.079px;">Collection</div>
<div class="abs" style="left:30px;top:72px;width:1px;height:30px;background:#555;border-radius:0px;"></div>
<svg style="left:43.5px;top:69.5px" width="16" height="16" viewBox="-8 -8 16 16"><path d="M-1.8,-3.6 L1.8,0 L-1.8,3.6" fill="none" stroke="#c8c8c8" stroke-width="1.2" stroke-linecap="round" stroke-linejoin="round"/></svg>
<svg style="left:63px;top:69px;" width="16" height="15" viewBox="0 0 16 15"><circle cx="4" cy="4.2" r="3.2" fill="#e8955a"/><circle cx="10.3" cy="3.8" r="3.8" fill="#e8955a"/><rect x="2" y="7.5" width="10.5" height="6.5" rx="1" fill="#e8955a"/><path d="M12.5,10.5 L16,8 V14 Z" fill="#e8955a"/><circle cx="4" cy="4.2" r="1" fill="#282828"/><circle cx="10.3" cy="3.8" r="1.2" fill="#282828"/></svg>
<div class="t" style="left:85.00px;top:70.00px;font-size:12px;line-height:16px;color:#e0e0e0;letter-spacing:-0.448px;">Camera</div>
<div class="abs" style="left:145px;top:68px;width:20px;height:18.5px;background:#4c4c4c;border-radius:4px;border:1px solid #606060"></div>
<svg style="left:147.5px;top:70px;" width="16" height="15" viewBox="0 0 16 15"><g fill="none" stroke="#28c9a0" stroke-width="1.1"><path d="M2,5 A2.8,2.8 0 0 1 7,3.2 A3.6,3.6 0 0 1 13.5,5.5 A3,3 0 0 1 11,8.5 H4 A2.5,2.5 0 0 1 2,5 Z"/><circle cx="10.3" cy="4.5" r="1.2"/><rect x="4" y="10" width="7" height="3.8"/><path d="M11,12 L14,10 V14 Z M4,11.8 H2"/></g></svg>
<svg style="left:43.5px;top:89.5px" width="16" height="16" viewBox="-8 -8 16 16"><path d="M-1.8,-3.6 L1.8,0 L-1.8,3.6" fill="none" stroke="#c8c8c8" stroke-width="1.2" stroke-linecap="round" stroke-linejoin="round"/></svg>
<div class="abs" style="left:61.5px;top:88px;width:19.5px;height:18.5px;background:#5a6a90;border-radius:4px;border:1px solid #7485ad"></div>
<svg style="left:64px;top:90px;" width="14" height="15" viewBox="0 0 14 15"><path d="M4.4,6.7 A3.3,3.3 0 1 1 10.4,6.4 A3.2,3.2 0 1 1 7.4,11.7 A3.3,3.3 0 1 1 4.4,6.7 Z" fill="#e2935a"/></svg>
<div class="t" style="left:85.00px;top:90.00px;font-size:12px;line-height:16px;color:#f3a52e;letter-spacing:-0.122px;">cropgeometryBF</div>
<svg style="left:195.5px;top:89.5px;" width="15" height="16" viewBox="0 0 15 16"><path d="M4.4,6.7 A3.3,3.3 0 1 1 10.4,6.4 A3.2,3.2 0 1 1 7.4,11.7 A3.3,3.3 0 1 1 4.4,6.7 Z" fill="none" stroke="#1fc4a2" stroke-width="1.1" transform="scale(1.05)"/></svg>
<div class="abs" style="left:514.5px;top:51.5px;width:11px;height:11px;background:#e6e6e6;border-radius:1.5px;"></div>
<svg style="left:515px;top:52px;" width="10" height="10" viewBox="0 0 10 10"><path d="M1.8,5 L4.2,7.6 L8.4,2.3" fill="none" stroke="#1a1a1a" stroke-width="1.6"/></svg>
<svg style="left:533px;top:50.7px;" width="14" height="11" viewBox="0 0 14 11"><path d="M1,5.5 Q7,-1.5 13,5.5 Q7,12.5 1,5.5 Z" fill="#e6e6e6"/><circle cx="7" cy="5.5" r="3.1" fill="#282828"/><circle cx="7" cy="5.5" r="1.7" fill="#e6e6e6"/></svg>
<svg style="left:554px;top:49.7px;" width="14" height="13" viewBox="0 0 14 13"><path d="M1,3.5 H3.5 L4.5,1.5 H9.5 L10.5,3.5 H13 V11.5 H1 Z" fill="#e6e6e6"/><circle cx="7" cy="7.3" r="3.4" fill="#282828"/><circle cx="7" cy="7.3" r="2.3" fill="#d0d0d0"/><circle cx="7" cy="7.3" r="1" fill="#555"/></svg>
<svg style="left:533px;top:70.7px;" width="14" height="11" viewBox="0 0 14 11"><path d="M1,5.5 Q7,-1.5 13,5.5 Q7,12.5 1,5.5 Z" fill="#e6e6e6"/><circle cx="7" cy="5.5" r="3.1" fill="#282828"/><circle cx="7" cy="5.5" r="1.7" fill="#e6e6e6"/></svg>
<svg style="left:554px;top:69.7px;" width="14" height="13" viewBox="0 0 14 13"><path d="M1,3.5 H3.5 L4.5,1.5 H9.5 L10.5,3.5 H13 V11.5 H1 Z" fill="#e6e6e6"/><circle cx="7" cy="7.3" r="3.4" fill="#282828"/><circle cx="7" cy="7.3" r="2.3" fill="#d0d0d0"/><circle cx="7" cy="7.3" r="1" fill="#555"/></svg>
<svg style="left:533px;top:90.7px;" width="14" height="11" viewBox="0 0 14 11"><path d="M1,5.5 Q7,-1.5 13,5.5 Q7,12.5 1,5.5 Z" fill="#e6e6e6"/><circle cx="7" cy="5.5" r="3.1" fill="#282828"/><circle cx="7" cy="5.5" r="1.7" fill="#e6e6e6"/></svg>
<svg style="left:554px;top:89.7px;" width="14" height="13" viewBox="0 0 14 13"><path d="M1,3.5 H3.5 L4.5,1.5 H9.5 L10.5,3.5 H13 V11.5 H1 Z" fill="#e6e6e6"/><circle cx="7" cy="7.3" r="3.4" fill="#282828"/><circle cx="7" cy="7.3" r="2.3" fill="#d0d0d0"/><circle cx="7" cy="7.3" r="1" fill="#555"/></svg>
</div>
<div class="area" style="left:1340px;top:197px;width:579px;height:804px;background:#303030;--l:0.30px;--t:0.40px;--r:0.20px;--b:0.40px;--rad:6px;">
<div class="abs" style="left:0px;top:26px;width:29.2px;height:779px;background:#1e1e1e;border-radius:0px;"></div>
<div class="abs" style="left:11px;top:2.5px;width:30px;height:18.5px;background:#282828;border-radius:4px;border:1px solid #3c3c3c"></div>
<svg style="left:14px;top:4.5px;" width="16" height="15" viewBox="0 0 16 15"><rect x="0.8" y="1" width="14" height="5.5" rx="2.7" fill="#e6e6e6"/><rect x="0.8" y="8.5" width="14" height="5.5" rx="2.7" fill="#e6e6e6"/><circle cx="11.5" cy="3.75" r="1.7" fill="#282828"/><circle cx="4.3" cy="11.25" r="1.7" fill="#282828"/></svg>
<svg style="left:27px;top:4.5px" width="16" height="16" viewBox="-8 -8 16 16"><path d="M-3.2,-1.6 L0,1.6 L3.2,-1.6" fill="none" stroke="#e0e0e0" stroke-width="1.3" stroke-linecap="round" stroke-linejoin="round"/></svg>
<div class="abs" style="left:232px;top:2.5px;width:118.5px;height:18.5px;background:#1d1d1d;border-radius:4px;border:1px solid #383838"></div>
<svg style="left:236px;top:4.5px;" width="15" height="15" viewBox="0 0 15 15"><circle cx="9" cy="5.5" r="4.2" fill="none" stroke="#e0e0e0" stroke-width="1.2" stroke-linecap="round"/><path d="M6,8.5 L1.5,13" fill="none" stroke="#e0e0e0" stroke-width="1.2" stroke-linecap="round"/></svg>
<div class="t" style="left:258.00px;top:4.00px;font-size:12px;line-height:16px;color:#6a6a6a;letter-spacing:-0.505px;">Search</div>
<div class="abs" style="left:552.5px;top:2.5px;width:19px;height:18.5px;background:#282828;border-radius:4px;border:1px solid #3c3c3c"></div>
<svg style="left:554px;top:4.5px" width="16" height="16" viewBox="-8 -8 16 16"><path d="M-3.2,-1.6 L0,1.6 L3.2,-1.6" fill="none" stroke="#e0e0e0" stroke-width="1.3" stroke-linecap="round" stroke-linejoin="round"/></svg>
<div class="abs" style="left:3.5px;top:367px;width:26px;height:26.5px;background:#303030;border-radius:4px 0 0 4px;"></div>
<svg style="left:8px;top:40px;" width="16" height="16" viewBox="0 0 16 16"><path d="M4,1 V8" stroke="#c2c2c2" stroke-width="1.6"/><circle cx="4" cy="12" r="2.2" fill="#c2c2c2"/><path d="M9,1.5 V5 Q11.5,7 14,5 V1.5 M11.5,6 V15" fill="none" stroke="#c2c2c2" stroke-width="1.7"/></svg>
<svg style="left:8px;top:75px;" width="16" height="16" viewBox="0 0 16 16"><rect x="1.5" y="5" width="12" height="9.5" rx="1" fill="none" stroke="#c2c2c2" stroke-width="1.4"/><path d="M4,5 V2.5 H9 V5 M13.5,7 L15.5,6 V13 L13.5,12" fill="none" stroke="#c2c2c2" stroke-width="1.2"/><rect x="4" y="8" width="5.5" height="3.5" fill="#c2c2c2"/></svg>
<svg style="left:8px;top:103px;" width="16" height="16" viewBox="0 0 16 16"><path d="M1.5,2 H14.5 V6.5 H1.5 Z" fill="#c2c2c2"/><rect x="3.5" y="8" width="9" height="6.5" fill="none" stroke="#c2c2c2" stroke-width="1.3"/><path d="M5,13.5 L8,10 L11,13.5 Z" fill="#c2c2c2"/></svg>
<svg style="left:8px;top:131px;" width="16" height="16" viewBox="0 0 16 16"><path d="M1.5,5 V14.5 H11 M3.8,3 V12.3 H13" fill="none" stroke="#c2c2c2" stroke-width="1.1"/><rect x="6" y="1" width="9" height="9" fill="none" stroke="#c2c2c2" stroke-width="1.2"/><path d="M7,9.5 L10,5 L13,9.5 Z" fill="#c2c2c2"/></svg>
<svg style="left:8px;top:160px;" width="16" height="16" viewBox="0 0 16 16"><path d="M5,1.5 L9,11 Q5,15 1.5,11 Z" fill="#c2c2c2"/><circle cx="12.5" cy="3.5" r="1.8" fill="#c2c2c2"/><circle cx="11" cy="11.5" r="3.2" fill="none" stroke="#c2c2c2" stroke-width="1.3"/></svg>
<svg style="left:8px;top:188px;" width="16" height="16" viewBox="0 0 16 16"><circle cx="8" cy="8" r="5.6" fill="none" stroke="#c4525c" stroke-width="1.2"/><path d="M4.5,5 Q7,3.6 8,5.4 Q9,7.2 7,8 Q5.4,8.6 6.2,10.6 Q3.6,9.6 3.4,7 Z M9.8,9 Q11.8,8.4 12.4,9.6 Q11.6,12 9.6,12.4 Z" fill="#c4525c"/><path d="M1.5,12.8 L14.8,2.2" stroke="#c4525c" stroke-width="1" /></svg>
<svg style="left:8px;top:224px;" width="16" height="16" viewBox="0 0 16 16"><rect x="1.5" y="1.5" width="13" height="3.2" fill="none" stroke="#c2c2c2" stroke-width="1.2"/><path d="M2.5,5 V14.5 H13.5 V5" fill="none" stroke="#c2c2c2" stroke-width="1.2"/><path d="M6,8.5 H10" stroke="#c2c2c2" stroke-width="1.6"/></svg>
<svg style="left:8px;top:260px;" width="16" height="16" viewBox="0 0 16 16"><rect x="4.2" y="4.2" width="7.6" height="7.6" fill="#d18a52"/><path d="M1.5,5 V1.5 H5 M11,1.5 H14.5 V5 M14.5,11 V14.5 H11 M5,14.5 H1.5 V11" fill="none" stroke="#d18a52" stroke-width="1.3"/></svg>
<svg style="left:8px;top:288px;" width="16" height="16" viewBox="0 0 16 16"><path d="M13.8,3.2 L11,6 L9.5,4.5 L12.3,1.7 A4,4 0 0 0 7.2,6.8 L1.5,12.5 A1.5,1.5 0 0 0 3.6,14.6 L9.3,8.9 A4,4 0 0 0 13.8,3.2 Z" fill="#5b82c9"/></svg>
<svg style="left:8px;top:316px;" width="16" height="16" viewBox="0 0 16 16"><path d="M11.5,4.2 A5.6,5.6 0 1 0 13.4,9.8" fill="none" stroke="#5b82c9" stroke-width="1.2" stroke-linecap="round"/><circle cx="7.8" cy="8.3" r="2.5" fill="#5b82c9"/><circle cx="12.8" cy="3.2" r="1.6" fill="#5b82c9"/></svg>
<svg style="left:8px;top:344px;" width="16" height="16" viewBox="0 0 16 16"><path d="M12.2,1.3 Q15,1 14.7,3.8 L13.2,10 A6,6 0 1 1 6,2.8 Z" fill="none" stroke="#5b82c9" stroke-width="1.2" stroke-linejoin="round"/><circle cx="7" cy="9" r="3" fill="none" stroke="#5b82c9" stroke-width="1.2"/><circle cx="7" cy="9" r="1.1" fill="#5b82c9"/></svg>
<svg style="left:8px;top:372px;" width="16" height="16" viewBox="0 0 16 16"><path d="M4.4,6.7 A3.3,3.3 0 1 1 10.4,6.4 A3.2,3.2 0 1 1 7.4,11.7 A3.3,3.3 0 1 1 4.4,6.7 Z" fill="none" stroke="#1fc4a2" stroke-width="1.2" transform="translate(0,-0.5) scale(1.1)"/></svg>
<svg style="left:8px;top:400px;" width="16" height="16" viewBox="0 0 16 16"><circle cx="8" cy="8" r="6.3" fill="none" stroke="#c4626c" stroke-width="1.3"/><path d="M8,8 V1.7 A6.3,6.3 0 0 0 1.7,8 Z M8,8 V14.3 A6.3,6.3 0 0 0 14.3,8 Z" fill="#c4626c"/></svg>
<svg style="left:38px;top:35px;" width="14" height="14" viewBox="0 0 14 14"><rect x="3.2" y="3.2" width="7.6" height="7.6" fill="#e6e6e6"/><path d="M0.7,4 V0.7 H4 M10,0.7 H13.3 V4 M13.3,10 V13.3 H10 M4,13.3 H0.7 V10" fill="none" stroke="#e6e6e6" stroke-width="1.2"/></svg>
<div class="t" style="left:60.00px;top:34.50px;font-size:11.5px;line-height:15px;color:#e0e0e0;letter-spacing:-0.321px;">cropgeometryBF</div>
<svg style="left:149px;top:34.5px" width="16" height="16" viewBox="-8 -8 16 16"><path d="M-1.7,-3.4 L1.7,0 L-1.7,3.4" fill="none" stroke="#c0c0c0" stroke-width="1.2" stroke-linecap="round" stroke-linejoin="round"/></svg>
<svg style="left:169.5px;top:34.5px;" width="14" height="15" viewBox="0 0 14 15"><path d="M4.4,6.7 A3.3,3.3 0 1 1 10.4,6.4 A3.2,3.2 0 1 1 7.4,11.7 A3.3,3.3 0 1 1 4.4,6.7 Z" fill="none" stroke="#e0e0e0" stroke-width="1.1"/></svg>
<div class="t" style="left:192.00px;top:34.50px;font-size:11.5px;line-height:15px;color:#e0e0e0;letter-spacing:-0.117px;">cropgeometryBF.001</div>
<svg style="left:554px;top:35px;" width="14" height="14" viewBox="0 0 14 14"><path d="M9.5,1.5 L12.5,4.5 L11,5 L8.5,8 L8,10 L4,6 L6,5.5 L9,3 Z M6,8 L1.5,12.5" fill="none" stroke="#b0b0b0" stroke-width="1.1" stroke-linejoin="round"/></svg>
<div class="abs" style="left:36px;top:67px;width:535.5px;height:18px;background:#1d1d1d;border-radius:4px;border:1px solid #3a3a3a"></div>
<div class="abs" style="left:36px;top:67px;width:30px;height:18px;background:#282828;border-radius:4px 0 0 4px;border:1px solid #3c3c3c"></div>
<svg style="left:40px;top:68.5px;" width="14" height="15" viewBox="0 0 14 15"><path d="M4.4,6.7 A3.3,3.3 0 1 1 10.4,6.4 A3.2,3.2 0 1 1 7.4,11.7 A3.3,3.3 0 1 1 4.4,6.7 Z" fill="none" stroke="#e0e0e0" stroke-width="1.1"/></svg>
<svg style="left:51.5px;top:68.5px" width="16" height="16" viewBox="-8 -8 16 16"><path d="M-2.8,-1.4 L0,1.4 L2.8,-1.4" fill="none" stroke="#e0e0e0" stroke-width="1.3" stroke-linecap="round" stroke-linejoin="round"/></svg>
<div class="t" style="left:72.00px;top:68.00px;font-size:11.5px;line-height:15px;color:#e0e0e0;letter-spacing:-0.117px;">cropgeometryBF.001</div>
<div class="abs" style="left:552.5px;top:67px;width:19px;height:18px;background:#545454;border-radius:0 4px 4px 0;"></div>
<svg style="left:555.2px;top:68.8px;" width="14" height="15" viewBox="0 0 14 15"><path d="M7,1 Q10.5,2.8 13,2.8 V7.5 Q13,12 7,14.2 Q1,12 1,7.5 V2.8 Q3.5,2.8 7,1 Z" fill="none" stroke="#c0c0c0" stroke-width="1.1"/></svg>
<div class="abs" style="left:36px;top:95px;width:536px;height:185px;background:#3d3d3d;border-radius:4px;"></div>
<svg style="left:39.5px;top:98.5px" width="16" height="16" viewBox="-8 -8 16 16"><path d="M-4.3,-2.15 L0,2.15 L4.3,-2.15" fill="none" stroke="#d0d0d0" stroke-width="1.1" stroke-linecap="round" stroke-linejoin="round"/></svg>
<div class="t" style="left:55.00px;top:98.50px;font-size:11.5px;line-height:15px;color:#e0e0e0;letter-spacing:-0.495px;">Grids</div>
<svg style="left:553px;top:104px;" width="10" height="4" viewBox="0 0 10 4"><g fill="#777"><rect x="0" y="0" width="1" height="1"/><rect x="3" y="0" width="1" height="1"/><rect x="6" y="0" width="1" height="1"/><rect x="9" y="0" width="1" height="1"/><rect x="0" y="3" width="1" height="1"/><rect x="3" y="3" width="1" height="1"/><rect x="6" y="3" width="1" height="1"/><rect x="9" y="3" width="1" height="1"/></g></svg>
<div class="abs" style="left:45px;top:126px;width:519px;height:146px;background:#2b2b2b;border-radius:3px;"></div>
<svg style="left:54px;top:261px;" width="6" height="6" viewBox="0 0 6 6"><path d="M0.5,0.5 L5.5,3 L0.5,5.5 Z" fill="#c8c8c8"/></svg>
<svg style="left:306px;top:261px;" width="12" height="5" viewBox="0 0 12 5"><g fill="#d0d0d0"><rect x="0" y="0" width="1" height="1"/><rect x="3" y="0" width="1" height="1"/><rect x="6" y="0" width="1" height="1"/><rect x="9" y="0" width="1" height="1"/><rect x="0" y="3" width="1" height="1"/><rect x="3" y="3" width="1" height="1"/><rect x="6" y="3" width="1" height="1"/><rect x="9" y="3" width="1" height="1"/></g></svg>
<div class="abs" style="left:36px;top:284px;width:536px;height:49px;background:#3d3d3d;border-radius:4px;"></div>
<svg style="left:39.5px;top:286.5px" width="16" height="16" viewBox="-8 -8 16 16"><path d="M-4.3,-2.15 L0,2.15 L4.3,-2.15" fill="none" stroke="#d0d0d0" stroke-width="1.1" stroke-linecap="round" stroke-linejoin="round"/></svg>
<div class="t" style="left:55.00px;top:286.50px;font-size:11.5px;line-height:15px;color:#e0e0e0;letter-spacing:-0.583px;">OpenVDB File</div>
<svg style="left:553px;top:292px;" width="10" height="4" viewBox="0 0 10 4"><g fill="#777"><rect x="0" y="0" width="1" height="1"/><rect x="3" y="0" width="1" height="1"/><rect x="6" y="0" width="1" height="1"/><rect x="9" y="0" width="1" height="1"/><rect x="0" y="3" width="1" height="1"/><rect x="3" y="3" width="1" height="1"/><rect x="6" y="3" width="1" height="1"/><rect x="9" y="3" width="1" height="1"/></g></svg>
<div class="abs" style="left:45px;top:313px;width:500px;height:16.5px;background:#1d1d1d;border-radius:4px 0 0 4px;"></div>
<div class="abs" style="left:545px;top:313px;width:19px;height:16.5px;background:#545454;border-radius:0 4px 4px 0;"></div>
<svg style="left:547px;top:315px;" width="15" height="13" viewBox="0 0 15 13"><path d="M0.5,2 Q0.5,0.5 2,0.5 H5.5 L7,2.5 H14 V4.5 H0.5 Z" fill="#e6e6e6"/><rect x="0.5" y="5.3" width="13.5" height="7.2" rx="0.8" fill="#e6e6e6"/></svg>
<div class="abs" style="left:36px;top:340px;width:536px;height:195px;background:#3d3d3d;border-radius:4px;"></div>
<svg style="left:39.5px;top:344.5px" width="16" height="16" viewBox="-8 -8 16 16"><path d="M-4.3,-2.15 L0,2.15 L4.3,-2.15" fill="none" stroke="#d0d0d0" stroke-width="1.1" stroke-linecap="round" stroke-linejoin="round"/></svg>
<div class="t" style="left:55.00px;top:344.50px;font-size:11.5px;line-height:15px;color:#e0e0e0;letter-spacing:-0.371px;">Viewport Display</div>
<svg style="left:553px;top:350px;" width="10" height="4" viewBox="0 0 10 4"><g fill="#777"><rect x="0" y="0" width="1" height="1"/><rect x="3" y="0" width="1" height="1"/><rect x="6" y="0" width="1" height="1"/><rect x="9" y="0" width="1" height="1"/><rect x="0" y="3" width="1" height="1"/><rect x="3" y="3" width="1" height="1"/><rect x="6" y="3" width="1" height="1"/><rect x="9" y="3" width="1" height="1"/></g></svg>
<div class="t" style="left:197.00px;top:371.50px;font-size:11.5px;line-height:15px;color:#e0e0e0;letter-spacing:-0.225px;">Wireframe</div>
<div class="abs" style="left:257px;top:371.5px;width:307px;height:16.5px;background:#282828;border-radius:3px;box-shadow:0 1px 0 rgba(0,0,0,.25)"></div>
<div class="t" style="left:263.00px;top:372.25px;font-size:11.5px;line-height:15px;color:#e0e0e0;letter-spacing:-0.392px;">Boxes</div>
<svg style="left:550px;top:372.25px" width="16" height="16" viewBox="-8 -8 16 16"><path d="M-3.2,-1.6 L0,1.6 L3.2,-1.6" fill="none" stroke="#e0e0e0" stroke-width="1.2" stroke-linecap="round" stroke-linejoin="round"/></svg>
<div class="t" style="left:221.00px;top:390.50px;font-size:11.5px;line-height:15px;color:#e0e0e0;letter-spacing:-0.400px;">Detail</div>
<div class="abs" style="left:257px;top:390.5px;width:307px;height:16.5px;background:#282828;border-radius:3px;box-shadow:0 1px 0 rgba(0,0,0,.25)"></div>
<div class="t" style="left:263.00px;top:391.25px;font-size:11.5px;line-height:15px;color:#e0e0e0;letter-spacing:-0.592px;">Fine</div>
<svg style="left:550px;top:391.25px" width="16" height="16" viewBox="-8 -8 16 16"><path d="M-3.2,-1.6 L0,1.6 L3.2,-1.6" fill="none" stroke="#e0e0e0" stroke-width="1.2" stroke-linecap="round" stroke-linejoin="round"/></svg>
<div class="t" style="left:213.00px;top:413.50px;font-size:11.5px;line-height:15px;color:#e0e0e0;letter-spacing:-0.478px;">Density</div>
<div class="abs" style="left:257px;top:413px;width:307px;height:17.5px;background:#545454;border-radius:3px;box-shadow:0 1px 0 rgba(0,0,0,.25)"></div>
<div class="t" style="left:394.25px;top:414.25px;font-size:11.5px;line-height:15px;color:#e0e0e0;letter-spacing:0.345px;">1.000</div>
<div class="t" style="left:187.00px;top:433.50px;font-size:11.5px;line-height:15px;color:#e0e0e0;letter-spacing:-0.176px;">Interpolation</div>
<div class="abs" style="left:257px;top:433.5px;width:307px;height:16.5px;background:#282828;border-radius:3px;box-shadow:0 1px 0 rgba(0,0,0,.25)"></div>
<div class="t" style="left:263.00px;top:434.25px;font-size:11.5px;line-height:15px;color:#e0e0e0;letter-spacing:-0.327px;">Linear</div>
<svg style="left:550px;top:434.25px" width="16" height="16" viewBox="-8 -8 16 16"><path d="M-3.2,-1.6 L0,1.6 L3.2,-1.6" fill="none" stroke="#e0e0e0" stroke-width="1.2" stroke-linecap="round" stroke-linejoin="round"/></svg>
<svg style="left:51px;top:462px" width="16" height="16" viewBox="-8 -8 16 16"><path d="M-4.3,-2.15 L0,2.15 L4.3,-2.15" fill="none" stroke="#d0d0d0" stroke-width="1.1" stroke-linecap="round" stroke-linejoin="round"/></svg>
<div class="abs" style="left:69px;top:464px;width:13px;height:13.5px;background:#545454;border-radius:3px;"></div>
<div class="t" style="left:85.00px;top:462.50px;font-size:11.5px;line-height:15px;color:#e0e0e0;letter-spacing:-0.185px;">Slice</div>
<div class="abs" style="left:36px;top:481px;width:536px;height:54px;background:#383838;border-radius:0 0 4px 4px;"></div>
<div class="t" style="left:227.50px;top:489.50px;font-size:11.5px;line-height:15px;color:#7d7d7d;letter-spacing:-0.307px;">Axis</div>
<div class="abs" style="left:257px;top:490px;width:307px;height:16.5px;background:#333333;border-radius:3px;box-shadow:0 1px 0 rgba(0,0,0,.25)"></div>
<div class="t" style="left:263.00px;top:490.75px;font-size:11.5px;line-height:15px;color:#7a7a7a;letter-spacing:-0.289px;">Auto</div>
<svg style="left:550px;top:490.75px" width="16" height="16" viewBox="-8 -8 16 16"><path d="M-3.2,-1.6 L0,1.6 L3.2,-1.6" fill="none" stroke="#555" stroke-width="1.2" stroke-linecap="round" stroke-linejoin="round"/></svg>
<div class="t" style="left:212.00px;top:510.50px;font-size:11.5px;line-height:15px;color:#7d7d7d;letter-spacing:-0.614px;">Position</div>
<div class="abs" style="left:257px;top:510px;width:307px;height:17.5px;background:#464646;border-radius:3px;overflow:hidden"></div>
<div class="abs" style="left:257px;top:510px;width:152.5px;height:17.5px;background:#455a82;border-radius:3px 0 0 3px;"></div>
<div class="t" style="left:394.25px;top:511.00px;font-size:11.5px;line-height:15px;color:#9a9a9a;letter-spacing:0.345px;">0.500</div>
<div class="abs" style="left:36px;top:537px;width:536px;height:185px;background:#3d3d3d;border-radius:4px;"></div>
<svg style="left:39.5px;top:541.5px" width="16" height="16" viewBox="-8 -8 16 16"><path d="M-4.3,-2.15 L0,2.15 L4.3,-2.15" fill="none" stroke="#d0d0d0" stroke-width="1.1" stroke-linecap="round" stroke-linejoin="round"/></svg>
<div class="t" style="left:55.00px;top:541.50px;font-size:11.5px;line-height:15px;color:#e0e0e0;letter-spacing:-0.452px;">Render</div>
<svg style="left:553px;top:547px;" width="10" height="4" viewBox="0 0 10 4"><g fill="#777"><rect x="0" y="0" width="1" height="1"/><rect x="3" y="0" width="1" height="1"/><rect x="6" y="0" width="1" height="1"/><rect x="9" y="0" width="1" height="1"/><rect x="0" y="3" width="1" height="1"/><rect x="3" y="3" width="1" height="1"/><rect x="6" y="3" width="1" height="1"/><rect x="9" y="3" width="1" height="1"/></g></svg>
<div class="t" style="left:217.00px;top:568.50px;font-size:11.5px;line-height:15px;color:#e0e0e0;letter-spacing:-0.321px;">Space</div>
<div class="abs" style="left:257px;top:568px;width:307px;height:17px;background:#282828;border-radius:3px;box-shadow:0 1px 0 rgba(0,0,0,.25)"></div>
<div class="t" style="left:263.00px;top:569.00px;font-size:11.5px;line-height:15px;color:#e0e0e0;letter-spacing:-0.206px;">Object</div>
<svg style="left:550px;top:569px" width="16" height="16" viewBox="-8 -8 16 16"><path d="M-3.2,-1.6 L0,1.6 L3.2,-1.6" fill="none" stroke="#e0e0e0" stroke-width="1.2" stroke-linecap="round" stroke-linejoin="round"/></svg>
<div class="t" style="left:202.00px;top:586.50px;font-size:11.5px;line-height:15px;color:#e0e0e0;letter-spacing:-0.358px;">Step Size</div>
<div class="abs" style="left:257px;top:586px;width:307px;height:17px;background:#545454;border-radius:3px;box-shadow:0 1px 0 rgba(0,0,0,.25)"></div>
<div class="t" style="left:400.25px;top:587.00px;font-size:11.5px;line-height:15px;color:#e0e0e0;letter-spacing:-0.223px;">0 m</div>
<div class="t" style="left:209.50px;top:609.50px;font-size:11.5px;line-height:15px;color:#e0e0e0;letter-spacing:-0.381px;">Clipping</div>
<div class="abs" style="left:257px;top:609.5px;width:307px;height:17px;background:#545454;border-radius:3px;box-shadow:0 1px 0 rgba(0,0,0,.25)"></div>
<div class="t" style="left:394.25px;top:610.50px;font-size:11.5px;line-height:15px;color:#e0e0e0;letter-spacing:0.345px;">0.001</div>
<div class="t" style="left:205.00px;top:633.50px;font-size:11.5px;line-height:15px;color:#e0e0e0;letter-spacing:-0.477px;">Precision</div>
<div class="abs" style="left:257px;top:633px;width:307px;height:17px;background:#282828;border-radius:3px;box-shadow:0 1px 0 rgba(0,0,0,.25)"></div>
<div class="t" style="left:263.00px;top:634.00px;font-size:11.5px;line-height:15px;color:#e0e0e0;letter-spacing:-0.007px;">Full</div>
<svg style="left:550px;top:634px" width="16" height="16" viewBox="-8 -8 16 16"><path d="M-3.2,-1.6 L0,1.6 L3.2,-1.6" fill="none" stroke="#e0e0e0" stroke-width="1.2" stroke-linecap="round" stroke-linejoin="round"/></svg>
<div class="t" style="left:185.50px;top:656.50px;font-size:11.5px;line-height:15px;color:#e0e0e0;letter-spacing:-0.158px;">Velocity Grid</div>
<div class="abs" style="left:257px;top:656px;width:307px;height:17px;background:#1d1d1d;border-radius:3px;"></div>
<div class="t" style="left:186.00px;top:676.50px;font-size:11.5px;line-height:15px;color:#e0e0e0;letter-spacing:-0.098px;">Velocity Unit</div>
<div class="abs" style="left:257px;top:676.5px;width:307px;height:16.5px;background:#282828;border-radius:3px;box-shadow:0 1px 0 rgba(0,0,0,.25)"></div>
<div class="t" style="left:263.00px;top:677.25px;font-size:11.5px;line-height:15px;color:#e0e0e0;letter-spacing:-0.444px;">Frame</div>
<svg style="left:550px;top:677.25px" width="16" height="16" viewBox="-8 -8 16 16"><path d="M-3.2,-1.6 L0,1.6 L3.2,-1.6" fill="none" stroke="#e0e0e0" stroke-width="1.2" stroke-linecap="round" stroke-linejoin="round"/></svg>
<div class="t" style="left:178.00px;top:696.50px;font-size:11.5px;line-height:15px;color:#e0e0e0;letter-spacing:-0.114px;">Velocity Scale</div>
<div class="abs" style="left:257px;top:696.5px;width:307px;height:17px;background:#545454;border-radius:3px;box-shadow:0 1px 0 rgba(0,0,0,.25)"></div>
<div class="t" style="left:394.25px;top:697.50px;font-size:11.5px;line-height:15px;color:#e0e0e0;letter-spacing:0.345px;">1.000</div>
<div class="abs" style="left:36px;top:724px;width:536px;height:23px;background:#3d3d3d;border-radius:4px;"></div>
<svg style="left:40px;top:728.5px" width="16" height="16" viewBox="-8 -8 16 16"><path d="M-1.8,-3.6 L1.8,0 L-1.8,3.6" fill="none" stroke="#d0d0d0" stroke-width="1.1" stroke-linecap="round" stroke-linejoin="round"/></svg>
<div class="t" style="left:55.00px;top:728.50px;font-size:11.5px;line-height:15px;color:#e0e0e0;letter-spacing:-0.459px;">Animation</div>
<svg style="left:553px;top:734px;" width="10" height="4" viewBox="0 0 10 4"><g fill="#777"><rect x="0" y="0" width="1" height="1"/><rect x="3" y="0" width="1" height="1"/><rect x="6" y="0" width="1" height="1"/><rect x="9" y="0" width="1" height="1"/><rect x="0" y="3" width="1" height="1"/><rect x="3" y="3" width="1" height="1"/><rect x="6" y="3" width="1" height="1"/><rect x="9" y="3" width="1" height="1"/></g></svg>
<div class="abs" style="left:36px;top:749px;width:536px;height:23px;background:#3d3d3d;border-radius:4px;"></div>
<svg style="left:40px;top:753.5px" width="16" height="16" viewBox="-8 -8 16 16"><path d="M-1.8,-3.6 L1.8,0 L-1.8,3.6" fill="none" stroke="#d0d0d0" stroke-width="1.1" stroke-linecap="round" stroke-linejoin="round"/></svg>
<div class="t" style="left:55.00px;top:753.50px;font-size:11.5px;line-height:15px;color:#e0e0e0;letter-spacing:-0.454px;">Custom Properties</div>
<svg style="left:553px;top:759px;" width="10" height="4" viewBox="0 0 10 4"><g fill="#777"><rect x="0" y="0" width="1" height="1"/><rect x="3" y="0" width="1" height="1"/><rect x="6" y="0" width="1" height="1"/><rect x="9" y="0" width="1" height="1"/><rect x="0" y="3" width="1" height="1"/><rect x="3" y="3" width="1" height="1"/><rect x="6" y="3" width="1" height="1"/><rect x="9" y="3" width="1" height="1"/></g></svg>
</div>
<div class="area" style="left:0px;top:489px;width:291px;height:512px;background:#333333;--l:0.30px;--t:0.40px;--r:0.70px;--b:0.40px;--rad:6px;">
<div class="abs" style="left:0px;top:0px;width:291px;height:26px;background:#303030;border-radius:0px;"></div>
<div class="abs" style="left:0px;top:26px;width:209px;height:26px;background:#353535;border-radius:0px;"></div>
<div class="abs" style="left:8.5px;top:3.5px;width:31px;height:18.5px;background:#282828;border-radius:4px;border:1px solid #3c3c3c"></div>
<svg style="left:12.5px;top:5.5px;" width="15" height="15" viewBox="0 0 15 15"><path d="M4,1.5 H1.5 V13.5 H13.5 V8" fill="none" stroke="#e6e6e6" stroke-width="1.1"/><path d="M4.5,1 H14 V6.2 H11.8 V10.5 H8 V6.2 H4.5 Z" fill="#e6e6e6"/></svg>
<svg style="left:25.5px;top:5.5px" width="16" height="16" viewBox="-8 -8 16 16"><path d="M-3.2,-1.6 L0,1.6 L3.2,-1.6" fill="none" stroke="#e0e0e0" stroke-width="1.3" stroke-linecap="round" stroke-linejoin="round"/></svg>
<div class="abs" style="left:45.5px;top:3.5px;width:67px;height:18.5px;background:#282828;border-radius:4px;border:1px solid #3c3c3c"></div>
<svg style="left:50px;top:6px;" width="15" height="15" viewBox="0 0 15 15"><rect x="0.6" y="0.6" width="13" height="13" rx="1" fill="none" stroke="#e6e6e6" stroke-width="1.1"/><path d="M1,13.5 L5.5,6 L10,13.5 Z" fill="#e6e6e6"/><circle cx="10" cy="4" r="1.2" fill="#e6e6e6"/></svg>
<div class="t" style="left:71.00px;top:5.00px;font-size:12px;line-height:16px;color:#e0e0e0;letter-spacing:0.050px;">View</div>
<svg style="left:98px;top:5.5px" width="16" height="16" viewBox="-8 -8 16 16"><path d="M-3.2,-1.6 L0,1.6 L3.2,-1.6" fill="none" stroke="#e0e0e0" stroke-width="1.3" stroke-linecap="round" stroke-linejoin="round"/></svg>
<svg style="left:122px;top:6px;" width="13" height="14" viewBox="0 0 13 14"><path d="M0.5,2.5 H12.5 M0.5,7.5 H12.5 M0.5,12.5 H12.5" stroke="#a8a8a8" stroke-width="1" fill="none"/></svg>
<div class="abs" style="left:154.5px;top:3.5px;width:140px;height:18.5px;background:#282828;border-radius:4px;border:1px solid #3c3c3c"></div>
<svg style="left:159px;top:6px;" width="15" height="15" viewBox="0 0 15 15"><rect x="0.6" y="0.6" width="13" height="13" rx="1" fill="none" stroke="#e6e6e6" stroke-width="1.1"/><path d="M1,13.5 L5.5,6 L10,13.5 Z" fill="#e6e6e6"/><circle cx="10" cy="4" r="1.2" fill="#e6e6e6"/></svg>
<svg style="left:171.5px;top:5.5px" width="16" height="16" viewBox="-8 -8 16 16"><path d="M-3.2,-1.6 L0,1.6 L3.2,-1.6" fill="none" stroke="#e0e0e0" stroke-width="1.3" stroke-linecap="round" stroke-linejoin="round"/></svg>
<div class="abs" style="left:186px;top:4px;width:59px;height:18px;background:#545454;border-radius:0px;"></div>
<div class="abs" style="left:246px;top:4px;width:50px;height:18px;background:#545454;border-radius:0px;"></div>
<svg style="left:193px;top:8px;" width="10" height="10" viewBox="0 0 10 10"><path d="M5.5,0.5 V10.5 M0.5,5.5 H10.5" stroke="#e6e6e6" stroke-width="1" fill="none"/></svg>
<div class="t" style="left:213.50px;top:5.00px;font-size:12px;line-height:16px;color:#e0e0e0;letter-spacing:-0.337px;">New</div>
<svg style="left:250px;top:6.5px;" width="15" height="13" viewBox="0 0 15 13"><path d="M0.5,2 Q0.5,0.5 2,0.5 H5.5 L7,2.5 H14 V4.5 H0.5 Z" fill="#e6e6e6"/><rect x="0.5" y="5.3" width="13.5" height="7.2" rx="0.8" fill="#e6e6e6"/></svg>
<div class="t" style="left:270.50px;top:5.00px;font-size:12px;line-height:16px;color:#e0e0e0;letter-spacing:-0.591px;">Open</div>
<svg style="left:16px;top:30px;" width="19" height="19" viewBox="0 0 19 19"><ellipse cx="5" cy="15" rx="4.3" ry="2.6" fill="#8c8c8c"/><path d="M4.5,14.5 L12.5,6.5" stroke="#9a9a9a" stroke-width="3" stroke-linecap="round"/><path d="M11,4.5 L14.5,8" stroke="#e6e6e6" stroke-width="1.6" stroke-linecap="round"/><path d="M13,6 L15.8,3.2" stroke="#e6e6e6" stroke-width="3.6" stroke-linecap="round"/></svg>
<div class="abs" style="left:45px;top:30px;width:155px;height:18.5px;background:#545454;border-radius:3px;"></div>
<div class="t" style="left:60.00px;top:31.00px;font-size:12px;line-height:16px;color:#e0e0e0;letter-spacing:-0.262px;">Sample Size</div>
<div class="t" style="left:164.00px;top:31.00px;font-size:12px;line-height:16px;color:#e0e0e0;letter-spacing:0.078px;">1 px</div>
<div class="abs" style="left:1px;top:74px;width:8px;height:18px;background:#2c2c2c;border-radius:0 4px 4px 0;"></div>
<svg style="left:-4px;top:75px" width="16" height="16" viewBox="-8 -8 16 16"><path d="M-1.3,-2.6 L1.3,0 L-1.3,2.6" fill="none" stroke="#b0b0b0" stroke-width="1" stroke-linecap="round" stroke-linejoin="round"/></svg>
<div class="abs" style="left:282px;top:74px;width:8px;height:18px;background:#2c2c2c;border-radius:4px 0 0 4px;"></div>
<svg style="left:278px;top:75px" width="16" height="16" viewBox="-8 -8 16 16"><path d="M1.3,-2.6 L-1.3,0 L1.3,2.6" fill="none" stroke="#b0b0b0" stroke-width="1" stroke-linecap="round" stroke-linejoin="round"/></svg>
<div class="abs" style="left:253.5px;top:61px;width:27px;height:27px;background:#262626;border-radius:14px;"></div>
<div class="abs" style="left:253.5px;top:91px;width:27px;height:27px;background:#262626;border-radius:14px;"></div>
<svg style="left:258px;top:65.5px;" width="18" height="18" viewBox="0 0 18 18"><circle cx="10.4" cy="8.3" r="6.4" fill="#e6e6e6"/><path d="M6,13 L2,17" stroke="#e6e6e6" stroke-width="2.2" stroke-linecap="round"/><path d="M10.4,5 V11.6 M7.1,8.3 H13.7" stroke="#262626" stroke-width="1.2"/></svg>
<svg style="left:259.5px;top:96px;" width="16" height="17" viewBox="0 0 16 17"><ellipse cx="8.6" cy="11.6" rx="4.4" ry="4.2" fill="#e6e6e6"/><g stroke="#e6e6e6" stroke-linecap="round" fill="none"><path d="M5.6,10 L4.7,3" stroke-width="1.8"/><path d="M7.7,9 L7.5,1.3" stroke-width="1.8"/><path d="M9.9,9 L10.5,1.7" stroke-width="1.8"/><path d="M12,10.5 L13.7,4.4" stroke-width="1.8"/><path d="M5.6,12.8 L1.5,8.8" stroke-width="2.2"/></g></svg>
<svg style="left:17px;top:153px;" width="257" height="257" viewBox="0 0 257 257"><rect x="0.5" y="0.5" width="256" height="256" fill="#373737"/><path d="M32.5,0 V257 M0,32.5 H257" stroke="#484848" stroke-width="1"/><path d="M64.5,0 V257 M0,64.5 H257" stroke="#484848" stroke-width="1"/><path d="M96.5,0 V257 M0,96.5 H257" stroke="#484848" stroke-width="1"/><path d="M128.5,0 V257 M0,128.5 H257" stroke="#484848" stroke-width="1"/><path d="M160.5,0 V257 M0,160.5 H257" stroke="#484848" stroke-width="1"/><path d="M192.5,0 V257 M0,192.5 H257" stroke="#484848" stroke-width="1"/><path d="M224.5,0 V257 M0,224.5 H257" stroke="#484848" stroke-width="1"/><rect x="0.5" y="0.5" width="256" height="256" fill="none" stroke="#6c6c6c" stroke-width="1"/></svg>
</div>
<div class="area" style="left:293px;top:489px;width:1044px;height:512px;background:#1d1d1d;--l:0.80px;--t:0.70px;--r:0.40px;--b:0.40px;--rad:6px;background-image:radial-gradient(circle,#2b2b2b 0.9px,transparent 1.4px);background-size:29.17px 29.17px;background-position:11.52px 25.91px;">
<svg style="left:-293px;top:-489px;" width="1920" height="1024" viewBox="0 0 1920 1024"><path d="M718.6,513 C733,570 748,625 766,668 C776,694 786,708.5 800,708.5" fill="none" stroke="#151515" stroke-width="4.8"/><path d="M718.6,513 C733,570 748,625 766,668 C776,694 786,708.5 800,708.5" fill="none" stroke="#a1a1a1" stroke-width="3.3"/></svg>
<svg style="left:-293px;top:-489px;" width="1920" height="1024" viewBox="0 0 1920 1024"><path d="M591,714 C643.25,714 747.75,676.5 800,676.5" fill="none" stroke="#151515" stroke-width="4.8"/><path d="M591,714 C643.25,714 747.75,676.5 800,676.5" fill="none" stroke="#a1a1a1" stroke-width="3.3"/></svg>
<svg style="left:-293px;top:-489px;" width="1920" height="1024" viewBox="0 0 1920 1024"><path d="M304,807 C328.9,807 362.1,821.5 387,821.5" fill="none" stroke="#151515" stroke-width="4.8"/><path d="M304,807 C328.9,807 362.1,821.5 387,821.5" fill="none" stroke="#a1a1a1" stroke-width="3.3"/></svg>
<div class="abs" style="left:-9px;top:203px;width:20.5px;height:246px;background:#303030;border-radius:5px;box-shadow:0 2px 6px rgba(0,0,0,.55);"></div>
<div class="abs" style="left:-9px;top:203px;width:20.5px;height:29.5px;background:#83314a;border-radius:5px 5px 0 0;"></div>
<div class="abs" style="left:4.2px;top:247.2px;width:13.6px;height:13.6px;background:#c7c729;border-radius:7px;border:1px solid #141414"></div>
<div class="abs" style="left:4.2px;top:279.2px;width:13.6px;height:13.6px;background:#6363c7;border-radius:7px;border:1px solid #141414"></div>
<div class="abs" style="left:4.2px;top:311.2px;width:13.6px;height:13.6px;background:#a1a1a1;border-radius:7px;border:1px solid #141414"></div>
<div class="abs" style="left:4.2px;top:343.2px;width:13.6px;height:13.6px;background:#a1a1a1;border-radius:7px;border:1px solid #141414"></div>
<div class="abs" style="left:-9px;top:11px;width:42px;height:34px;background:#303030;border-radius:5px;box-shadow:0 2px 6px rgba(0,0,0,.55);"></div>
<div class="abs" style="left:163.5px;top:-9px;width:204px;height:81px;background:#303030;border-radius:5px;box-shadow:0 2px 6px rgba(0,0,0,.55);"></div>
<div class="abs" style="left:179px;top:34px;width:172.5px;height:27.5px;background:#545454;border-radius:4px;"></div>
<div class="t" style="left:202.60px;top:37.10px;font-size:16.8px;line-height:22px;color:#e6e6e6;letter-spacing:-0.112px;">Threshold</div>
<div class="t" style="left:289.00px;top:37.10px;font-size:16.8px;line-height:22px;color:#e6e6e6;letter-spacing:0.091px;">1.000</div>
<div class="abs" style="left:94px;top:174px;width:204px;height:215px;background:#303030;border-radius:5px;box-shadow:0 2px 6px rgba(0,0,0,.55);"></div>
<div class="abs" style="left:94px;top:174px;width:204px;height:29.5px;background:#246283;border-radius:5px 5px 0 0;"></div>
<svg style="left:109px;top:180.25px" width="16" height="16" viewBox="-8 -8 16 16"><path d="M-5.2,-2.6 L0,2.6 L5.2,-2.6" fill="none" stroke="#e6e6e6" stroke-width="1.5" stroke-linecap="round" stroke-linejoin="round"/></svg>
<div class="t" style="left:131.30px;top:178.15px;font-size:16.8px;line-height:22px;color:#e6e6e6;letter-spacing:0.131px;">Multiply</div>
<div class="t" style="left:240.30px;top:215.10px;font-size:16.8px;line-height:22px;color:#e6e6e6;letter-spacing:-0.045px;">Value</div>
<div class="abs" style="left:291.2px;top:218.2px;width:13.6px;height:13.6px;background:#a1a1a1;border-radius:7px;border:1px solid #141414"></div>
<div class="abs" style="left:109.5px;top:249.5px;width:172.5px;height:28.5px;background:#282828;border-radius:4px;border:1px solid #3d3d3d"></div>
<div class="t" style="left:121.50px;top:254.15px;font-size:16.8px;line-height:22px;color:#e6e6e6;letter-spacing:0.169px;">Multiply</div>
<svg style="left:264px;top:256.75px" width="16" height="16" viewBox="-8 -8 16 16"><path d="M-4,-2.0 L0,2.0 L4,-2.0" fill="none" stroke="#e6e6e6" stroke-width="1.5" stroke-linecap="round" stroke-linejoin="round"/></svg>
<div class="abs" style="left:109.5px;top:290.5px;width:19.5px;height:19.5px;background:#545454;border-radius:4px;"></div>
<div class="t" style="left:134.30px;top:289.90px;font-size:16.8px;line-height:22px;color:#e6e6e6;letter-spacing:-0.110px;">Clamp</div>
<div class="t" style="left:110.00px;top:322.40px;font-size:16.8px;line-height:22px;color:#e6e6e6;letter-spacing:-0.005px;">Value</div>
<div class="abs" style="left:87.2px;top:325.7px;width:13.6px;height:13.6px;background:#a1a1a1;border-radius:7px;border:1px solid #141414"></div>
<div class="abs" style="left:109.5px;top:351px;width:172.5px;height:27.5px;background:#545454;border-radius:4px;"></div>
<div class="t" style="left:133.40px;top:354.40px;font-size:16.8px;line-height:22px;color:#e6e6e6;letter-spacing:-0.105px;">Value</div>
<div class="t" style="left:189.00px;top:354.40px;font-size:16.8px;line-height:22px;color:#e6e6e6;letter-spacing:0.341px;">1000.000</div>
<div class="abs" style="left:87.2px;top:357.7px;width:13.6px;height:13.6px;background:#a1a1a1;border-radius:7px;border:1px solid #141414"></div>
<div class="abs" style="left:507px;top:28.5px;width:203px;height:214.5px;background:#303030;border-radius:5px;box-shadow:0 2px 6px rgba(0,0,0,.55);"></div>
<div class="abs" style="left:507px;top:28.5px;width:203px;height:29.5px;background:#246283;border-radius:5px 5px 0 0;"></div>
<svg style="left:522px;top:34.75px" width="16" height="16" viewBox="-8 -8 16 16"><path d="M-5.2,-2.6 L0,2.6 L5.2,-2.6" fill="none" stroke="#e6e6e6" stroke-width="1.5" stroke-linecap="round" stroke-linejoin="round"/></svg>
<div class="t" style="left:544.30px;top:32.65px;font-size:16.8px;line-height:22px;color:#e6e6e6;letter-spacing:0.131px;">Multiply</div>
<div class="t" style="left:653.70px;top:69.40px;font-size:16.8px;line-height:22px;color:#e6e6e6;letter-spacing:-0.085px;">Value</div>
<div class="abs" style="left:521.5px;top:104px;width:174px;height:29.5px;background:#282828;border-radius:4px;border:1px solid #3d3d3d"></div>
<div class="t" style="left:533.50px;top:109.15px;font-size:16.8px;line-height:22px;color:#e6e6e6;letter-spacing:0.169px;">Multiply</div>
<svg style="left:677.5px;top:111.75px" width="16" height="16" viewBox="-8 -8 16 16"><path d="M-4,-2.0 L0,2.0 L4,-2.0" fill="none" stroke="#e6e6e6" stroke-width="1.5" stroke-linecap="round" stroke-linejoin="round"/></svg>
<div class="abs" style="left:521.5px;top:145px;width:20px;height:20px;background:#545454;border-radius:4px;"></div>
<div class="t" style="left:546.30px;top:144.70px;font-size:16.8px;line-height:22px;color:#e6e6e6;letter-spacing:-0.110px;">Clamp</div>
<div class="t" style="left:522.30px;top:177.40px;font-size:16.8px;line-height:22px;color:#e6e6e6;letter-spacing:-0.065px;">Value</div>
<div class="t" style="left:522.30px;top:209.40px;font-size:16.8px;line-height:22px;color:#e6e6e6;letter-spacing:-0.065px;">Value</div>
<div class="abs" style="left:367.5px;top:400px;width:349px;height:130px;background:#303030;border-radius:5px;box-shadow:0 2px 6px rgba(0,0,0,.55);"></div>
<div class="abs" style="left:367.5px;top:400px;width:349px;height:29px;background:#246283;border-radius:5px 5px 0 0;"></div>
<svg style="left:382.5px;top:406px" width="16" height="16" viewBox="-8 -8 16 16"><path d="M-5.2,-2.6 L0,2.6 L5.2,-2.6" fill="none" stroke="#e6e6e6" stroke-width="1.5" stroke-linecap="round" stroke-linejoin="round"/></svg>
<div class="t" style="left:404.80px;top:403.90px;font-size:16.8px;line-height:22px;color:#e6e6e6;letter-spacing:-0.163px;">Color Ramp</div>
<div class="t" style="left:659.00px;top:440.60px;font-size:16.8px;line-height:22px;color:#e6e6e6;letter-spacing:0.270px;">Color</div>
<div class="t" style="left:658.50px;top:472.10px;font-size:16.8px;line-height:22px;color:#e6e6e6;letter-spacing:-0.194px;">Alpha</div>
<div class="abs" style="left:77px;top:488px;width:203px;height:60px;background:#303030;border-radius:5px;box-shadow:0 2px 6px rgba(0,0,0,.55);"></div>
<div class="abs" style="left:77px;top:488px;width:203px;height:29px;background:#3c3a84;border-radius:5px 5px 0 0;"></div>
<svg style="left:92px;top:494px" width="16" height="16" viewBox="-8 -8 16 16"><path d="M-5.2,-2.6 L0,2.6 L5.2,-2.6" fill="none" stroke="#e6e6e6" stroke-width="1.5" stroke-linecap="round" stroke-linejoin="round"/></svg>
<div class="t" style="left:114.30px;top:491.90px;font-size:16.8px;line-height:22px;color:#e6e6e6;letter-spacing:0.026px;">Dot Product</div>
<div class="abs" style="left:776px;top:205px;width:300px;height:340px;background:#303030;border-radius:5px;box-shadow:0 2px 6px rgba(0,0,0,.55);"></div>
<div class="abs" style="left:776px;top:205px;width:300px;height:29px;background:#2b652b;border-radius:5px 0 0 0;"></div>
<svg style="left:790.7px;top:211px" width="16" height="16" viewBox="-8 -8 16 16"><path d="M-5.2,-2.6 L0,2.6 L5.2,-2.6" fill="none" stroke="#e6e6e6" stroke-width="1.5" stroke-linecap="round" stroke-linejoin="round"/></svg>
<div class="t" style="left:812.00px;top:208.70px;font-size:16.8px;line-height:22px;color:#e6e6e6;letter-spacing:0.072px;">Principled Volume</div>
<div class="t" style="left:791.20px;top:281.40px;font-size:16.8px;line-height:22px;color:#e6e6e6;letter-spacing:0.250px;">Color</div>
<div class="t" style="left:791.20px;top:313.40px;font-size:16.8px;line-height:22px;color:#e6e6e6;letter-spacing:0.236px;">Color Attribute</div>
<div class="abs" style="left:924px;top:310px;width:140px;height:27.5px;background:#1d1d1d;border-radius:4px;"></div>
<div class="t" style="left:791.20px;top:345.40px;font-size:16.8px;line-height:22px;color:#e6e6e6;letter-spacing:-0.289px;">Density</div>
<div class="t" style="left:791.20px;top:377.40px;font-size:16.8px;line-height:22px;color:#e6e6e6;letter-spacing:-0.028px;">Density Attrib...</div>
<div class="abs" style="left:924px;top:374px;width:140px;height:27.5px;background:#1d1d1d;border-radius:4px;"></div>
<div class="abs" style="left:790.5px;top:406px;width:280px;height:27.5px;background:#545454;border-radius:4px;"></div>
<div class="abs" style="left:790.5px;top:406px;width:158.5px;height:27.5px;background:#4772b3;border-radius:4px 0 0 4px;"></div>
<div class="t" style="left:814.00px;top:409.40px;font-size:16.8px;line-height:22px;color:#e6e6e6;letter-spacing:0.212px;">Anisotropy</div>
<div class="t" style="left:791.20px;top:441.40px;font-size:16.8px;line-height:22px;color:#e6e6e6;letter-spacing:0.025px;">Absorption C...</div>
<div class="abs" style="left:924px;top:438px;width:140px;height:27.5px;background:#000000;border-radius:4px;"></div>
<div class="abs" style="left:790.5px;top:470px;width:280px;height:27.5px;background:#545454;border-radius:4px;"></div>
<div class="t" style="left:814.00px;top:473.40px;font-size:16.8px;line-height:22px;color:#e6e6e6;letter-spacing:-0.155px;">Emission Strength</div>
<div class="t" style="left:791.20px;top:505.40px;font-size:16.8px;line-height:22px;color:#e6e6e6;letter-spacing:-0.069px;">Emission Col...</div>
<div class="abs" style="left:924px;top:502.5px;width:140px;height:27.5px;background:#ffffff;border-radius:4px;"></div>
<svg style="left:-293px;top:-489px;" width="1920" height="1024" viewBox="0 0 1920 1024"><path d="M1003,568 C1036.0,568 1036.0,844.5 1069,844.5" fill="none" stroke="#151515" stroke-width="4.8"/><path d="M1003,568 C1036.0,568 1036.0,844.5 1069,844.5" fill="none" stroke="#a1a1a1" stroke-width="3.3"/></svg>
<svg style="left:-293px;top:-489px;" width="1920" height="1024" viewBox="0 0 1920 1024"><path d="M1009,939.5 C1039.0,939.5 1039.0,780.5 1069,780.5" fill="none" stroke="#151515" stroke-width="4.8"/><path d="M1009,939.5 C1039.0,939.5 1039.0,780.5 1069,780.5" fill="none" stroke="#c7c729" stroke-width="3.3"/></svg>
<div class="abs" style="left:703.2px;top:72.2px;width:13.6px;height:13.6px;background:#a1a1a1;border-radius:7px;border:1px solid #141414"></div>
<div class="abs" style="left:500.2px;top:180.7px;width:13.6px;height:13.6px;background:#a1a1a1;border-radius:7px;border:1px solid #141414"></div>
<div class="abs" style="left:500.2px;top:212.7px;width:13.6px;height:13.6px;background:#a1a1a1;border-radius:7px;border:1px solid #141414"></div>
<div class="abs" style="left:709.2px;top:443.7px;width:13.6px;height:13.6px;background:#c7c729;border-radius:7px;border:1px solid #141414"></div>
<div class="abs" style="left:709.2px;top:475.2px;width:13.6px;height:13.6px;background:#a1a1a1;border-radius:7px;border:1px solid #141414"></div>
<div class="abs" style="left:769.2px;top:284.7px;width:13.6px;height:13.6px;background:#c7c729;border-radius:7px;border:1px solid #141414"></div>
<div class="abs" style="left:769.2px;top:316.7px;width:13.6px;height:13.6px;background:#63b4ff;border-radius:7px;border:1px solid #141414"></div>
<div class="abs" style="left:769.2px;top:348.7px;width:13.6px;height:13.6px;background:#a1a1a1;border-radius:7px;border:1px solid #141414"></div>
<div class="abs" style="left:769.2px;top:380.7px;width:13.6px;height:13.6px;background:#63b4ff;border-radius:7px;border:1px solid #141414"></div>
<div class="abs" style="left:769.2px;top:412.7px;width:13.6px;height:13.6px;background:#a1a1a1;border-radius:7px;border:1px solid #141414"></div>
<div class="abs" style="left:769.2px;top:444.7px;width:13.6px;height:13.6px;background:#c7c729;border-radius:7px;border:1px solid #141414"></div>
<div class="abs" style="left:769.2px;top:476.7px;width:13.6px;height:13.6px;background:#a1a1a1;border-radius:7px;border:1px solid #141414"></div>
<div class="abs" style="left:769.2px;top:508.7px;width:13.6px;height:13.6px;background:#c7c729;border-radius:7px;border:1px solid #141414"></div>
<div class="abs" style="left:277px;top:506px;width:558px;height:3px;background:#3c3c3c;border-radius:1.5px;"></div>
<div class="abs" style="left:1040px;top:116px;width:2.6px;height:255px;background:#3a3a3a;border-radius:1px;"></div>
<div class="abs" style="left:0px;top:0px;width:1045px;height:26.5px;background:#1d1d1d;border-radius:0px;"></div>
<div class="abs" style="left:9px;top:3.5px;width:32px;height:18.5px;background:#282828;border-radius:4px;border:1px solid #3c3c3c"></div>
<svg style="left:13px;top:5.5px;" width="15" height="15" viewBox="0 0 15 15"><circle cx="7.5" cy="7.5" r="6.4" fill="none" stroke="#e0e0e0" stroke-width="1.1"/><path d="M3.9,6.2 A3.9,3.9 0 0 1 6,3.8" fill="none" stroke="#e0e0e0" stroke-width="1.3" stroke-linecap="round"/><circle cx="8" cy="3.5" r="0.8" fill="#e0e0e0"/></svg>
<svg style="left:26.5px;top:5.5px" width="16" height="16" viewBox="-8 -8 16 16"><path d="M-3.2,-1.6 L0,1.6 L3.2,-1.6" fill="none" stroke="#e0e0e0" stroke-width="1.3" stroke-linecap="round" stroke-linejoin="round"/></svg>
<div class="abs" style="left:46.5px;top:3.5px;width:90.5px;height:18.5px;background:#282828;border-radius:4px;border:1px solid #3c3c3c"></div>
<svg style="left:51px;top:5.5px;" width="14" height="14" viewBox="0 0 14 14"><rect x="3.2" y="3.2" width="7.6" height="7.6" fill="#e6e6e6"/><path d="M0.7,4 V0.7 H4 M10,0.7 H13.3 V4 M13.3,10 V13.3 H10 M4,13.3 H0.7 V10" fill="none" stroke="#e6e6e6" stroke-width="1.2"/></svg>
<div class="t" style="left:72.00px;top:5.00px;font-size:12px;line-height:16px;color:#e0e0e0;letter-spacing:-0.115px;">Object</div>
<svg style="left:122px;top:5.5px" width="16" height="16" viewBox="-8 -8 16 16"><path d="M-3.2,-1.6 L0,1.6 L3.2,-1.6" fill="none" stroke="#e0e0e0" stroke-width="1.3" stroke-linecap="round" stroke-linejoin="round"/></svg>
<div class="t" style="left:149.00px;top:5.00px;font-size:12px;line-height:16px;color:#e0e0e0;letter-spacing:0.050px;">View</div>
<div class="t" style="left:190.00px;top:5.00px;font-size:12px;line-height:16px;color:#e0e0e0;letter-spacing:-0.310px;">Select</div>
<div class="t" style="left:237.00px;top:5.00px;font-size:12px;line-height:16px;color:#e0e0e0;letter-spacing:0.048px;">Add</div>
<div class="t" style="left:274.00px;top:5.00px;font-size:12px;line-height:16px;color:#e0e0e0;letter-spacing:-0.049px;">Node</div>
<div class="abs" style="left:315px;top:6px;width:13px;height:13.5px;background:#4772b3;border-radius:3px;"></div>
<svg style="left:316.5px;top:8px;" width="10" height="10" viewBox="0 0 10 10"><path d="M1.5,5 L4,7.6 L8.6,2" fill="none" stroke="#fff" stroke-width="1.5"/></svg>
<div class="t" style="left:332.00px;top:5.00px;font-size:12px;line-height:16px;color:#f0f0f0;letter-spacing:-0.264px;">Use Nodes</div>
<div class="abs" style="left:422px;top:3.5px;width:80px;height:18.5px;background:#282828;border-radius:4px;border:1px solid #3c3c3c"></div>
<div class="t" style="left:430.00px;top:5.00px;font-size:12px;line-height:16px;color:#e0e0e0;letter-spacing:-0.033px;">Slot 1</div>
<svg style="left:487px;top:5.5px" width="16" height="16" viewBox="-8 -8 16 16"><path d="M-3.2,-1.6 L0,1.6 L3.2,-1.6" fill="none" stroke="#e0e0e0" stroke-width="1.3" stroke-linecap="round" stroke-linejoin="round"/></svg>
<div class="abs" style="left:507px;top:3.5px;width:173px;height:19px;background:#282828;border-radius:4px;border:1px solid #3c3c3c"></div>
<div class="abs" style="left:539px;top:4.5px;width:81px;height:17px;background:#1d1d1d;border-radius:0px;"></div>
<div class="abs" style="left:538.5px;top:4px;width:1px;height:18px;background:#3c3c3c;border-radius:0px;"></div>
<div class="abs" style="left:620px;top:3.5px;width:60px;height:19px;background:#545454;border-radius:0 4px 4px 0;"></div>
<div class="abs" style="left:639.5px;top:3.5px;width:1px;height:19px;background:#444;border-radius:0px;"></div>
<div class="abs" style="left:659.5px;top:3.5px;width:1px;height:19px;background:#444;border-radius:0px;"></div>
<svg style="left:511px;top:5.5px;" width="15" height="15" viewBox="0 0 15 15"><circle cx="7.5" cy="7.5" r="6.3" fill="none" stroke="#e6e6e6" stroke-width="1.2"/><path d="M7.5,7.5 V1.2 A6.3,6.3 0 0 0 1.2,7.5 Z M7.5,7.5 V13.8 A6.3,6.3 0 0 0 13.8,7.5 Z" fill="#e6e6e6"/></svg>
<svg style="left:524px;top:5.5px" width="16" height="16" viewBox="-8 -8 16 16"><path d="M-3.2,-1.6 L0,1.6 L3.2,-1.6" fill="none" stroke="#e0e0e0" stroke-width="1.3" stroke-linecap="round" stroke-linejoin="round"/></svg>
<div class="t" style="left:546.00px;top:5.00px;font-size:12px;line-height:16px;color:#e0e0e0;letter-spacing:-0.005px;">Material.001</div>
<svg style="left:623.5px;top:5.8px;" width="14" height="15" viewBox="0 0 14 15"><path d="M7,1 Q10.5,2.8 13,2.8 V7.5 Q13,12 7,14.2 Q1,12 1,7.5 V2.8 Q3.5,2.8 7,1 Z" fill="none" stroke="#a8a8a8" stroke-width="1.1"/></svg>
<svg style="left:643px;top:5.8px;" width="14" height="15" viewBox="0 0 14 15"><path d="M1.5,5 V13.7 H9.3" fill="none" stroke="#e0e0e0" stroke-width="1.1"/><path d="M4.5,1.3 H10 L13.3,4.6 V11 H4.5 Z M10,1.3 V4.6 H13.3" fill="none" stroke="#e0e0e0" stroke-width="1.1" stroke-linejoin="round"/></svg>
<svg style="left:665.5px;top:8.5px;" width="9" height="9" viewBox="0 0 9 9"><path d="M0.5,0.5 L8.5,8.5 M8.5,0.5 L0.5,8.5" stroke="#e0e0e0" stroke-width="1.1" fill="none"/></svg>
<svg style="left:687.5px;top:5.5px;" width="15" height="15" viewBox="0 0 15 15"><path d="M10,1 L14,5 L12.3,5.6 L9.6,8.6 L9,11 L4.3,6.3 L6.7,5.7 L9.6,2.8 Z M6.6,8.7 L1,14.3" fill="none" stroke="#c0c0c0" stroke-width="1.1" stroke-linejoin="round"/></svg>
<div class="abs" style="left:971.5px;top:3.5px;width:19.5px;height:18.5px;background:#545454;border-radius:4px;"></div>
<svg style="left:974px;top:5.5px;" width="14" height="14" viewBox="0 0 14 14"><path d="M2,6.5 L5.5,2.5 A4.6,4.6 0 0 1 11.8,9.2 L8,12.8 L6,10.8 L9.5,7.3 A1.7,1.7 0 0 0 7.3,4.8 L4,8.5 Z" fill="none" stroke="#b0b0b0" stroke-width="1" stroke-linejoin="round"/></svg>
<div class="abs" style="left:997px;top:3.5px;width:38.5px;height:18.5px;background:#282828;border-radius:4px;border:1px solid #3c3c3c"></div>
<div class="abs" style="left:997px;top:3.5px;width:19px;height:18.5px;background:#4772b3;border-radius:4px 0 0 4px;"></div>
<svg style="left:999px;top:5.5px;" width="15" height="15" viewBox="0 0 15 15"><circle cx="9" cy="6" r="4.6" fill="#ffffff"/><circle cx="6" cy="9.5" r="4" fill="none" stroke="#ffffff" stroke-width="1.2"/><circle cx="7.5" cy="7.5" r="1.6" fill="#4772b3"/></svg>
<svg style="left:1017.5px;top:5.5px" width="16" height="16" viewBox="-8 -8 16 16"><path d="M-3.2,-1.6 L0,1.6 L3.2,-1.6" fill="none" stroke="#e0e0e0" stroke-width="1.3" stroke-linecap="round" stroke-linejoin="round"/></svg>
<svg style="left:20px;top:41px;" width="14" height="14" viewBox="0 0 14 14"><rect x="3.2" y="3.2" width="7.6" height="7.6" fill="#e6e6e6"/><path d="M0.7,4 V0.7 H4 M10,0.7 H13.3 V4 M13.3,10 V13.3 H10 M4,13.3 H0.7 V10" fill="none" stroke="#e6e6e6" stroke-width="1.2"/></svg>
<div class="t" style="left:43.00px;top:40.00px;font-size:12px;line-height:16px;color:#dcdcdc;letter-spacing:-0.122px;">cropgeometryBF</div>
<svg style="left:142px;top:40px" width="16" height="16" viewBox="-8 -8 16 16"><path d="M-1.7,-3.4 L1.7,0 L-1.7,3.4" fill="none" stroke="#c8c8c8" stroke-width="1.2" stroke-linecap="round" stroke-linejoin="round"/></svg>
<svg style="left:158.5px;top:40.5px;" width="19" height="15" viewBox="0 0 19 15"><circle cx="6" cy="7.5" r="5.5" fill="#b8b8b8"/><circle cx="12" cy="7.5" r="6.2" fill="#303030" stroke="#e6e6e6" stroke-width="1.2"/><path d="M12,7.5 V1.3 A6.2,6.2 0 0 0 5.8,7.5 Z M12,7.5 V13.7 A6.2,6.2 0 0 0 18.2,7.5 Z" fill="#e6e6e6"/></svg>
<div class="t" style="left:186.00px;top:40.50px;font-size:11.5px;line-height:15px;color:#cfcfcf;letter-spacing:-0.023px;">Material.001</div>
<div class="abs" style="left:1px;top:47px;width:7px;height:18px;background:#262626;border-radius:0 4px 4px 0;"></div>
<svg style="left:-3.5px;top:48px" width="16" height="16" viewBox="-8 -8 16 16"><path d="M-1.3,-2.6 L1.3,0 L-1.3,2.6" fill="none" stroke="#b0b0b0" stroke-width="1" stroke-linecap="round" stroke-linejoin="round"/></svg>
<div class="abs" style="left:1035.5px;top:47px;width:8px;height:18px;background:#262626;border-radius:4px 0 0 4px;"></div>
<svg style="left:1031.5px;top:48px" width="16" height="16" viewBox="-8 -8 16 16"><path d="M1.3,-2.6 L-1.3,0 L1.3,2.6" fill="none" stroke="#b0b0b0" stroke-width="1" stroke-linecap="round" stroke-linejoin="round"/></svg>
</div>
<svg style="left:1270px;top:0px;" width="60" height="64" viewBox="0 0 60 64"><ellipse cx="30.4" cy="32.6" rx="19.9" ry="22.2" fill="none" stroke="#00ff00" stroke-width="7.4"/></svg>
<svg style="left:1370px;top:475px;" width="550" height="62" viewBox="0 0 550 62"><rect x="7.4" y="8.5" width="535.3" height="45.2" rx="6" fill="none" stroke="#ff0000" stroke-width="5.2"/></svg>
</div>
</body></html>
